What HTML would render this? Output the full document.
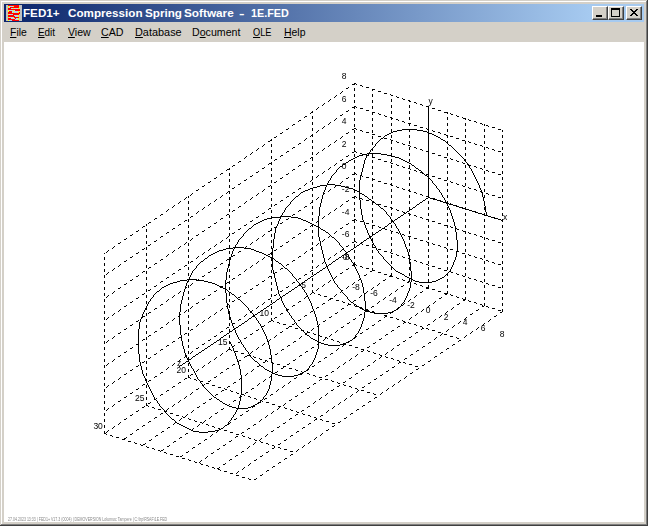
<!DOCTYPE html>
<html><head><meta charset="utf-8"><style>
*{margin:0;padding:0;box-sizing:border-box}
html,body{width:648px;height:526px;overflow:hidden;background:#d4d0c8;font-family:"Liberation Sans",sans-serif}
#win{position:absolute;left:0;top:0;width:648px;height:526px;background:#d4d0c8}
.edge{position:absolute}
#title{position:absolute;left:4px;top:4px;width:640px;height:18px;background:linear-gradient(to right,#0a246a 0px,#a6caf0 586px)}
.tw{position:absolute;top:7px;transform-origin:0 0;font-weight:bold;font-size:11px;color:#fff;white-space:pre;line-height:13px}
.btn{position:absolute;top:6px;width:16px;height:14px;background:#d4d0c8;border-top:1px solid #fff;border-left:1px solid #fff;border-right:1px solid #404040;border-bottom:1px solid #404040;box-shadow:inset -1px -1px 0 #808080}
.mi{position:absolute;top:26px;transform-origin:0 0;font-size:11px;line-height:13px;color:#000;white-space:pre}
.mi u{text-decoration:underline}
#client{position:absolute;left:4px;top:42px;width:640px;height:480px;background:#fff;overflow:hidden}
#plot{position:absolute;left:0;top:0}
#status{position:absolute;left:8px;top:516px;font-size:5px;line-height:6px;color:#888;white-space:pre;transform:scaleX(0.715);transform-origin:0 0}
</style></head><body><div id="win">
<div class="edge" style="left:0;top:0;width:648px;height:1px;background:#d4d0c8"></div>
<div class="edge" style="left:1px;top:1px;width:645px;height:1px;background:#fff"></div>
<div class="edge" style="left:1px;top:1px;width:1px;height:523px;background:#fff"></div>
<div class="edge" style="left:647px;top:0;width:1px;height:526px;background:#404040"></div>
<div class="edge" style="left:0;top:525px;width:648px;height:1px;background:#404040"></div>
<div class="edge" style="left:646px;top:1px;width:1px;height:524px;background:#808080"></div>
<div class="edge" style="left:1px;top:524px;width:646px;height:1px;background:#808080"></div>
<div id="title"><svg width="16" height="16" viewBox="0 0 16 16" shape-rendering="crispEdges" style="position:absolute;left:2px;top:1px"><rect x="0" y="0" width="2" height="1" fill="#c0c0c0"/><rect x="2" y="0" width="11" height="1" fill="#ff0000"/><rect x="13" y="0" width="3" height="1" fill="#c0c0c0"/><rect x="0" y="1" width="2" height="1" fill="#c0c0c0"/><rect x="2" y="1" width="1" height="1" fill="#ffff00"/><rect x="3" y="1" width="4" height="1" fill="#b4d4e4"/><rect x="7" y="1" width="1" height="1" fill="#ffff00"/><rect x="8" y="1" width="5" height="1" fill="#ff0000"/><rect x="13" y="1" width="3" height="1" fill="#c0c0c0"/><rect x="0" y="2" width="2" height="1" fill="#c0c0c0"/><rect x="2" y="2" width="1" height="1" fill="#ffff00"/><rect x="3" y="2" width="1" height="1" fill="#b4d4e4"/><rect x="4" y="2" width="9" height="1" fill="#ff0000"/><rect x="13" y="2" width="1" height="1" fill="#ffff00"/><rect x="14" y="2" width="2" height="1" fill="#c0c0c0"/><rect x="0" y="3" width="2" height="1" fill="#c0c0c0"/><rect x="2" y="3" width="3" height="1" fill="#ff0000"/><rect x="5" y="3" width="2" height="1" fill="#b4d4e4"/><rect x="7" y="3" width="1" height="1" fill="#ffff00"/><rect x="8" y="3" width="4" height="1" fill="#b4d4e4"/><rect x="12" y="3" width="1" height="1" fill="#ffff00"/><rect x="13" y="3" width="3" height="1" fill="#c0c0c0"/><rect x="0" y="4" width="2" height="1" fill="#c0c0c0"/><rect x="2" y="4" width="12" height="1" fill="#ff0000"/><rect x="14" y="4" width="2" height="1" fill="#c0c0c0"/><rect x="0" y="5" width="2" height="1" fill="#c0c0c0"/><rect x="2" y="5" width="1" height="1" fill="#ffff00"/><rect x="3" y="5" width="4" height="1" fill="#b4d4e4"/><rect x="7" y="5" width="1" height="1" fill="#ffff00"/><rect x="8" y="5" width="1" height="1" fill="#b4d4e4"/><rect x="9" y="5" width="5" height="1" fill="#ff0000"/><rect x="14" y="5" width="2" height="1" fill="#c0c0c0"/><rect x="0" y="6" width="2" height="1" fill="#c0c0c0"/><rect x="2" y="6" width="1" height="1" fill="#ffff00"/><rect x="3" y="6" width="3" height="1" fill="#ff0000"/><rect x="6" y="6" width="6" height="1" fill="#b4d4e4"/><rect x="12" y="6" width="1" height="1" fill="#ffff00"/><rect x="13" y="6" width="3" height="1" fill="#c0c0c0"/><rect x="0" y="7" width="2" height="1" fill="#c0c0c0"/><rect x="2" y="7" width="4" height="1" fill="#ff0000"/><rect x="6" y="7" width="1" height="1" fill="#b4d4e4"/><rect x="7" y="7" width="1" height="1" fill="#ffff00"/><rect x="8" y="7" width="4" height="1" fill="#b4d4e4"/><rect x="12" y="7" width="1" height="1" fill="#ffff00"/><rect x="13" y="7" width="1" height="1" fill="#ff0000"/><rect x="14" y="7" width="2" height="1" fill="#c0c0c0"/><rect x="0" y="8" width="2" height="1" fill="#c0c0c0"/><rect x="2" y="8" width="12" height="1" fill="#ff0000"/><rect x="14" y="8" width="2" height="1" fill="#c0c0c0"/><rect x="0" y="9" width="2" height="1" fill="#c0c0c0"/><rect x="2" y="9" width="1" height="1" fill="#ffff00"/><rect x="3" y="9" width="4" height="1" fill="#b4d4e4"/><rect x="7" y="9" width="6" height="1" fill="#ff0000"/><rect x="13" y="9" width="3" height="1" fill="#c0c0c0"/><rect x="0" y="10" width="2" height="1" fill="#c0c0c0"/><rect x="2" y="10" width="6" height="1" fill="#ff0000"/><rect x="8" y="10" width="4" height="1" fill="#b4d4e4"/><rect x="12" y="10" width="1" height="1" fill="#ffff00"/><rect x="13" y="10" width="3" height="1" fill="#c0c0c0"/><rect x="0" y="11" width="2" height="1" fill="#c0c0c0"/><rect x="2" y="11" width="7" height="1" fill="#ff0000"/><rect x="9" y="11" width="3" height="1" fill="#b4d4e4"/><rect x="12" y="11" width="1" height="1" fill="#ffff00"/><rect x="13" y="11" width="3" height="1" fill="#c0c0c0"/><rect x="0" y="12" width="2" height="1" fill="#c0c0c0"/><rect x="2" y="12" width="1" height="1" fill="#ffff00"/><rect x="3" y="12" width="4" height="1" fill="#b4d4e4"/><rect x="7" y="12" width="1" height="1" fill="#ffff00"/><rect x="8" y="12" width="5" height="1" fill="#ff0000"/><rect x="13" y="12" width="3" height="1" fill="#c0c0c0"/><rect x="0" y="13" width="2" height="1" fill="#c0c0c0"/><rect x="2" y="13" width="3" height="1" fill="#ff0000"/><rect x="5" y="13" width="4" height="1" fill="#b4d4e4"/><rect x="9" y="13" width="1" height="1" fill="#ff0000"/><rect x="10" y="13" width="2" height="1" fill="#b4d4e4"/><rect x="12" y="13" width="1" height="1" fill="#ffff00"/><rect x="13" y="13" width="3" height="1" fill="#c0c0c0"/><rect x="0" y="14" width="2" height="1" fill="#c0c0c0"/><rect x="2" y="14" width="7" height="1" fill="#ff0000"/><rect x="9" y="14" width="3" height="1" fill="#b4d4e4"/><rect x="12" y="14" width="1" height="1" fill="#ffff00"/><rect x="13" y="14" width="3" height="1" fill="#c0c0c0"/><rect x="0" y="15" width="2" height="1" fill="#c0c0c0"/><rect x="2" y="15" width="1" height="1" fill="#ffff00"/><rect x="3" y="15" width="3" height="1" fill="#b4d4e4"/><rect x="6" y="15" width="7" height="1" fill="#ff0000"/><rect x="13" y="15" width="3" height="1" fill="#c0c0c0"/></svg></div>
<span class="tw" style="left:23px;transform:scaleX(1.06)">FED1+</span><span class="tw" style="left:68px;transform:scaleX(1.06)">Compression</span><span class="tw" style="left:145px;transform:scaleX(1.06)">Spring</span><span class="tw" style="left:184px;transform:scaleX(1.07)">Software</span><span class="tw" style="left:239px;transform:scaleX(1.5)">-</span><span class="tw" style="left:251px;transform:scaleX(0.98)">1E.FED</span>
<div class="btn" style="left:592px"><svg width="14" height="12" style="position:absolute;left:0;top:0"><rect x="3" y="8" width="6" height="2" fill="#000"/></svg></div>
<div class="btn" style="left:608px"><svg width="14" height="12" style="position:absolute;left:0;top:0"><rect x="2" y="1" width="8" height="8" fill="none" stroke="#000" stroke-width="1" transform="translate(0.5 0.5)"/><rect x="2" y="1" width="9" height="2" fill="#000"/></svg></div>
<div class="btn" style="left:626px"><svg width="14" height="12" style="position:absolute;left:0;top:0"><path d="M3 2h2v1h-2zM9 2h2v1h-2zM4 3h2v1h-2zM8 3h2v1h-2zM5 4h4v1h-4zM6 5h2v1h-2zM5 6h4v1h-4zM4 7h2v1h-2zM8 7h2v1h-2zM3 8h2v1h-2zM9 8h2v1h-2z" fill="#000" shape-rendering="crispEdges"/></svg></div>
<span class="mi" style="left:10px;transform:scaleX(0.95)"><u>F</u>ile</span><span class="mi" style="left:38px;transform:scaleX(0.9)"><u>E</u>dit</span><span class="mi" style="left:68px;transform:scaleX(0.96)"><u>V</u>iew</span><span class="mi" style="left:101px;transform:scaleX(0.97)"><u>C</u>AD</span><span class="mi" style="left:134.5px;transform:scaleX(0.99)"><u>D</u>atabase</span><span class="mi" style="left:192px;transform:scaleX(0.965)">D<u>o</u>cument</span><span class="mi" style="left:253px;transform:scaleX(0.84)"><u>O</u>LE</span><span class="mi" style="left:283.5px;transform:scaleX(0.95)"><u>H</u>elp</span>
<div id="client"></div>
<svg id="plot" width="648" height="526" style="position:absolute;left:0;top:0">
<g shape-rendering="crispEdges">
<path d="M354 83h2v1h-2zM352 84h3v1h-3zM356 84h1v1h-1zM360 85h2v1h-2zM362 86h1v1h-1zM348 87h1v1h-1zM366 87h3v1h-3zM346 88h2v1h-2zM354 88h1v1h-1zM354 89h1v1h-1zM372 89h3v1h-3zM354 90h1v1h-1zM372 90h1v1h-1zM342 91h1v1h-1zM378 91h3v1h-3zM341 92h1v1h-1zM340 93h1v1h-1zM384 93h3v1h-3zM354 94h1v1h-1zM372 94h1v1h-1zM390 94h1v1h-1zM336 95h1v1h-1zM354 95h1v1h-1zM372 95h1v1h-1zM391 95h2v1h-2zM335 96h1v1h-1zM354 96h1v1h-1zM372 96h1v1h-1zM396 96h1v1h-1zM334 97h1v1h-1zM397 97h2v1h-2zM402 98h1v1h-1zM330 99h1v1h-1zM391 99h1v1h-1zM403 99h2v1h-2zM329 100h1v1h-1zM354 100h1v1h-1zM372 100h1v1h-1zM391 100h1v1h-1zM408 100h2v1h-2zM328 101h1v1h-1zM354 101h1v1h-1zM372 101h1v1h-1zM391 101h1v1h-1zM409 101h2v1h-2zM354 102h1v1h-1zM372 102h1v1h-1zM414 102h2v1h-2zM324 103h1v1h-1zM416 103h1v1h-1zM323 104h1v1h-1zM420 104h2v1h-2zM322 105h1v1h-1zM391 105h1v1h-1zM409 105h1v1h-1zM422 105h1v1h-1zM354 106h2v1h-2zM372 106h1v1h-1zM391 106h1v1h-1zM409 106h1v1h-1zM426 106h3v1h-3zM318 107h1v1h-1zM352 107h3v1h-3zM356 107h1v1h-1zM372 107h1v1h-1zM391 107h1v1h-1zM409 107h1v1h-1zM428 107h1v1h-1zM317 108h1v1h-1zM354 108h1v1h-1zM360 108h3v1h-3zM372 108h1v1h-1zM432 108h3v1h-3zM316 109h1v1h-1zM348 110h1v1h-1zM366 110h3v1h-3zM438 110h3v1h-3zM312 111h1v1h-1zM346 111h2v1h-2zM391 111h1v1h-1zM409 111h1v1h-1zM428 111h1v1h-1zM311 112h2v1h-2zM354 112h1v1h-1zM372 112h3v1h-3zM391 112h1v1h-1zM409 112h1v1h-1zM428 112h1v1h-1zM444 112h4v1h-4zM310 113h1v1h-1zM354 113h1v1h-1zM372 113h1v1h-1zM378 113h1v1h-1zM391 113h1v1h-1zM409 113h1v1h-1zM428 113h1v1h-1zM447 113h1v1h-1zM450 113h1v1h-1zM342 114h1v1h-1zM354 114h1v1h-1zM372 114h1v1h-1zM379 114h2v1h-2zM451 114h2v1h-2zM340 115h2v1h-2zM384 115h1v1h-1zM456 115h1v1h-1zM305 116h2v1h-2zM312 116h1v1h-1zM385 116h2v1h-2zM457 116h2v1h-2zM304 117h1v1h-1zM312 117h1v1h-1zM390 117h2v1h-2zM409 117h1v1h-1zM428 117h1v1h-1zM447 117h1v1h-1zM462 117h1v1h-1zM312 118h1v1h-1zM336 118h1v1h-1zM354 118h1v1h-1zM372 118h1v1h-1zM391 118h2v1h-2zM409 118h1v1h-1zM428 118h1v1h-1zM447 118h1v1h-1zM463 118h3v1h-3zM335 119h1v1h-1zM354 119h1v1h-1zM372 119h1v1h-1zM391 119h1v1h-1zM396 119h2v1h-2zM409 119h1v1h-1zM428 119h1v1h-1zM447 119h1v1h-1zM465 119h1v1h-1zM468 119h1v1h-1zM299 120h2v1h-2zM334 120h1v1h-1zM354 120h1v1h-1zM372 120h1v1h-1zM398 120h1v1h-1zM469 120h2v1h-2zM298 121h1v1h-1zM402 121h2v1h-2zM474 121h2v1h-2zM312 122h1v1h-1zM330 122h1v1h-1zM404 122h1v1h-1zM476 122h1v1h-1zM312 123h1v1h-1zM329 123h1v1h-1zM391 123h1v1h-1zM408 123h3v1h-3zM428 123h1v1h-1zM447 123h1v1h-1zM465 123h1v1h-1zM480 123h2v1h-2zM293 124h2v1h-2zM312 124h1v1h-1zM328 124h1v1h-1zM354 124h1v1h-1zM372 124h1v1h-1zM391 124h1v1h-1zM409 124h1v1h-1zM428 124h1v1h-1zM447 124h1v1h-1zM465 124h1v1h-1zM482 124h1v1h-1zM484 124h1v1h-1zM292 125h1v1h-1zM354 125h1v1h-1zM372 125h1v1h-1zM391 125h1v1h-1zM409 125h1v1h-1zM414 125h3v1h-3zM428 125h1v1h-1zM447 125h1v1h-1zM465 125h1v1h-1zM484 125h1v1h-1zM486 125h2v1h-2zM324 126h1v1h-1zM354 126h1v1h-1zM372 126h1v1h-1zM488 126h1v1h-1zM323 127h1v1h-1zM420 127h3v1h-3zM492 127h3v1h-3zM288 128h1v1h-1zM312 128h1v1h-1zM322 128h1v1h-1zM354 128h2v1h-2zM426 128h1v1h-1zM286 129h2v1h-2zM312 129h1v1h-1zM352 129h2v1h-2zM356 129h1v1h-1zM391 129h1v1h-1zM409 129h1v1h-1zM427 129h2v1h-2zM447 129h1v1h-1zM465 129h1v1h-1zM484 129h1v1h-1zM498 129h3v1h-3zM312 130h1v1h-1zM318 130h1v1h-1zM354 130h1v1h-1zM360 130h2v1h-2zM372 130h1v1h-1zM391 130h1v1h-1zM409 130h1v1h-1zM428 130h1v1h-1zM432 130h1v1h-1zM447 130h1v1h-1zM465 130h1v1h-1zM484 130h1v1h-1zM502 130h1v1h-1zM317 131h1v1h-1zM354 131h1v1h-1zM362 131h1v1h-1zM372 131h1v1h-1zM391 131h1v1h-1zM409 131h1v1h-1zM428 131h1v1h-1zM433 131h2v1h-2zM447 131h1v1h-1zM465 131h1v1h-1zM484 131h1v1h-1zM502 131h1v1h-1zM282 132h1v1h-1zM316 132h1v1h-1zM348 132h1v1h-1zM354 132h1v1h-1zM366 132h3v1h-3zM372 132h1v1h-1zM438 132h2v1h-2zM280 133h2v1h-2zM346 133h2v1h-2zM440 133h1v1h-1zM312 134h1v1h-1zM372 134h3v1h-3zM444 134h2v1h-2zM311 135h2v1h-2zM391 135h1v1h-1zM409 135h1v1h-1zM428 135h1v1h-1zM446 135h2v1h-2zM465 135h1v1h-1zM484 135h1v1h-1zM502 135h1v1h-1zM276 136h1v1h-1zM310 136h1v1h-1zM312 136h1v1h-1zM342 136h1v1h-1zM354 136h1v1h-1zM372 136h1v1h-1zM378 136h3v1h-3zM391 136h1v1h-1zM409 136h1v1h-1zM428 136h1v1h-1zM447 136h1v1h-1zM450 136h3v1h-3zM465 136h1v1h-1zM484 136h1v1h-1zM502 136h1v1h-1zM274 137h2v1h-2zM341 137h1v1h-1zM354 137h1v1h-1zM372 137h1v1h-1zM391 137h1v1h-1zM409 137h1v1h-1zM428 137h1v1h-1zM447 137h1v1h-1zM465 137h1v1h-1zM484 137h1v1h-1zM502 137h1v1h-1zM306 138h1v1h-1zM340 138h1v1h-1zM354 138h1v1h-1zM372 138h1v1h-1zM384 138h3v1h-3zM456 138h3v1h-3zM271 139h1v1h-1zM305 139h1v1h-1zM390 139h1v1h-1zM270 140h2v1h-2zM304 140h1v1h-1zM312 140h1v1h-1zM336 140h1v1h-1zM391 140h2v1h-2zM462 140h3v1h-3zM268 141h2v1h-2zM312 141h1v1h-1zM335 141h1v1h-1zM391 141h1v1h-1zM396 141h1v1h-1zM409 141h1v1h-1zM428 141h1v1h-1zM447 141h1v1h-1zM465 141h1v1h-1zM468 141h1v1h-1zM484 141h1v1h-1zM502 141h1v1h-1zM312 142h1v1h-1zM334 142h1v1h-1zM354 142h1v1h-1zM372 142h1v1h-1zM391 142h1v1h-1zM397 142h2v1h-2zM409 142h1v1h-1zM428 142h1v1h-1zM447 142h1v1h-1zM465 142h1v1h-1zM469 142h2v1h-2zM484 142h1v1h-1zM502 142h1v1h-1zM299 143h2v1h-2zM354 143h1v1h-1zM372 143h1v1h-1zM391 143h1v1h-1zM402 143h1v1h-1zM409 143h1v1h-1zM428 143h1v1h-1zM447 143h1v1h-1zM465 143h1v1h-1zM474 143h1v1h-1zM484 143h1v1h-1zM502 143h1v1h-1zM264 144h1v1h-1zM271 144h1v1h-1zM298 144h1v1h-1zM330 144h1v1h-1zM354 144h1v1h-1zM372 144h1v1h-1zM403 144h2v1h-2zM475 144h2v1h-2zM263 145h1v1h-1zM271 145h1v1h-1zM329 145h1v1h-1zM408 145h2v1h-2zM480 145h2v1h-2zM262 146h1v1h-1zM271 146h1v1h-1zM312 146h1v1h-1zM328 146h1v1h-1zM410 146h1v1h-1zM482 146h1v1h-1zM293 147h2v1h-2zM312 147h1v1h-1zM391 147h1v1h-1zM409 147h1v1h-1zM414 147h2v1h-2zM428 147h1v1h-1zM447 147h1v1h-1zM465 147h1v1h-1zM484 147h1v1h-1zM486 147h2v1h-2zM502 147h1v1h-1zM258 148h1v1h-1zM292 148h1v1h-1zM312 148h1v1h-1zM324 148h1v1h-1zM354 148h1v1h-1zM372 148h1v1h-1zM391 148h1v1h-1zM409 148h1v1h-1zM416 148h1v1h-1zM428 148h1v1h-1zM447 148h1v1h-1zM465 148h1v1h-1zM484 148h1v1h-1zM488 148h1v1h-1zM502 148h1v1h-1zM257 149h1v1h-1zM323 149h1v1h-1zM354 149h1v1h-1zM372 149h1v1h-1zM391 149h1v1h-1zM409 149h1v1h-1zM420 149h2v1h-2zM428 149h1v1h-1zM447 149h1v1h-1zM465 149h1v1h-1zM484 149h1v1h-1zM492 149h2v1h-2zM502 149h1v1h-1zM256 150h1v1h-1zM271 150h1v1h-1zM322 150h1v1h-1zM354 150h1v1h-1zM372 150h1v1h-1zM422 150h1v1h-1zM494 150h1v1h-1zM271 151h1v1h-1zM287 151h2v1h-2zM354 151h2v1h-2zM426 151h2v1h-2zM498 151h3v1h-3zM252 152h1v1h-1zM271 152h1v1h-1zM286 152h1v1h-1zM312 152h1v1h-1zM318 152h1v1h-1zM352 152h2v1h-2zM356 152h1v1h-1zM428 152h1v1h-1zM251 153h1v1h-1zM312 153h1v1h-1zM317 153h1v1h-1zM360 153h2v1h-2zM391 153h1v1h-1zM409 153h1v1h-1zM428 153h1v1h-1zM432 153h3v1h-3zM447 153h1v1h-1zM465 153h1v1h-1zM484 153h1v1h-1zM502 153h1v1h-1zM250 154h1v1h-1zM312 154h1v1h-1zM316 154h1v1h-1zM354 154h1v1h-1zM362 154h1v1h-1zM372 154h1v1h-1zM391 154h1v1h-1zM409 154h1v1h-1zM428 154h1v1h-1zM447 154h1v1h-1zM465 154h1v1h-1zM484 154h1v1h-1zM502 154h1v1h-1zM281 155h2v1h-2zM348 155h1v1h-1zM354 155h1v1h-1zM366 155h3v1h-3zM372 155h1v1h-1zM391 155h1v1h-1zM409 155h1v1h-1zM428 155h1v1h-1zM438 155h3v1h-3zM447 155h1v1h-1zM465 155h1v1h-1zM484 155h1v1h-1zM502 155h1v1h-1zM246 156h1v1h-1zM271 156h1v1h-1zM280 156h1v1h-1zM346 156h2v1h-2zM354 156h1v1h-1zM372 156h1v1h-1zM245 157h1v1h-1zM271 157h1v1h-1zM311 157h2v1h-2zM372 157h3v1h-3zM444 157h3v1h-3zM244 158h1v1h-1zM271 158h1v1h-1zM310 158h1v1h-1zM312 158h1v1h-1zM450 158h1v1h-1zM275 159h2v1h-2zM312 159h1v1h-1zM342 159h1v1h-1zM378 159h3v1h-3zM391 159h1v1h-1zM409 159h1v1h-1zM428 159h1v1h-1zM447 159h1v1h-1zM451 159h2v1h-2zM465 159h1v1h-1zM484 159h1v1h-1zM502 159h1v1h-1zM274 160h1v1h-1zM312 160h1v1h-1zM340 160h2v1h-2zM354 160h1v1h-1zM372 160h1v1h-1zM391 160h1v1h-1zM409 160h1v1h-1zM428 160h1v1h-1zM447 160h1v1h-1zM456 160h1v1h-1zM465 160h1v1h-1zM484 160h1v1h-1zM502 160h1v1h-1zM239 161h2v1h-2zM305 161h2v1h-2zM354 161h1v1h-1zM372 161h1v1h-1zM384 161h3v1h-3zM391 161h1v1h-1zM409 161h1v1h-1zM428 161h1v1h-1zM447 161h1v1h-1zM457 161h2v1h-2zM465 161h1v1h-1zM484 161h1v1h-1zM502 161h1v1h-1zM238 162h1v1h-1zM271 162h1v1h-1zM304 162h1v1h-1zM354 162h1v1h-1zM372 162h1v1h-1zM390 162h1v1h-1zM462 162h1v1h-1zM269 163h3v1h-3zM336 163h1v1h-1zM391 163h2v1h-2zM463 163h2v1h-2zM268 164h1v1h-1zM271 164h1v1h-1zM312 164h1v1h-1zM335 164h1v1h-1zM396 164h1v1h-1zM468 164h1v1h-1zM233 165h2v1h-2zM299 165h2v1h-2zM312 165h1v1h-1zM334 165h1v1h-1zM391 165h1v1h-1zM397 165h2v1h-2zM409 165h1v1h-1zM428 165h1v1h-1zM447 165h1v1h-1zM465 165h1v1h-1zM469 165h2v1h-2zM484 165h1v1h-1zM502 165h1v1h-1zM232 166h1v1h-1zM298 166h1v1h-1zM312 166h1v1h-1zM354 166h1v1h-1zM372 166h1v1h-1zM391 166h1v1h-1zM402 166h1v1h-1zM409 166h1v1h-1zM428 166h1v1h-1zM447 166h1v1h-1zM465 166h1v1h-1zM474 166h2v1h-2zM484 166h1v1h-1zM502 166h1v1h-1zM264 167h1v1h-1zM330 167h1v1h-1zM354 167h1v1h-1zM372 167h1v1h-1zM391 167h1v1h-1zM403 167h2v1h-2zM409 167h1v1h-1zM428 167h1v1h-1zM447 167h1v1h-1zM465 167h1v1h-1zM476 167h1v1h-1zM484 167h1v1h-1zM502 167h1v1h-1zM229 168h1v1h-1zM262 168h2v1h-2zM271 168h1v1h-1zM329 168h1v1h-1zM354 168h1v1h-1zM372 168h1v1h-1zM408 168h2v1h-2zM480 168h2v1h-2zM227 169h3v1h-3zM271 169h1v1h-1zM293 169h2v1h-2zM328 169h1v1h-1zM410 169h1v1h-1zM482 169h1v1h-1zM226 170h1v1h-1zM271 170h1v1h-1zM292 170h1v1h-1zM312 170h1v1h-1zM414 170h2v1h-2zM486 170h2v1h-2zM258 171h1v1h-1zM312 171h1v1h-1zM324 171h1v1h-1zM391 171h1v1h-1zM409 171h1v1h-1zM416 171h1v1h-1zM428 171h1v1h-1zM447 171h1v1h-1zM465 171h1v1h-1zM484 171h1v1h-1zM488 171h1v1h-1zM502 171h1v1h-1zM256 172h2v1h-2zM312 172h1v1h-1zM323 172h1v1h-1zM354 172h1v1h-1zM372 172h1v1h-1zM391 172h1v1h-1zM409 172h1v1h-1zM420 172h2v1h-2zM428 172h1v1h-1zM447 172h1v1h-1zM465 172h1v1h-1zM484 172h1v1h-1zM492 172h3v1h-3zM502 172h1v1h-1zM221 173h2v1h-2zM229 173h1v1h-1zM288 173h1v1h-1zM322 173h1v1h-1zM354 173h2v1h-2zM372 173h1v1h-1zM391 173h1v1h-1zM409 173h1v1h-1zM422 173h1v1h-1zM428 173h1v1h-1zM447 173h1v1h-1zM465 173h1v1h-1zM484 173h1v1h-1zM502 173h1v1h-1zM220 174h1v1h-1zM229 174h1v1h-1zM271 174h1v1h-1zM286 174h2v1h-2zM352 174h3v1h-3zM356 174h1v1h-1zM372 174h1v1h-1zM426 174h2v1h-2zM498 174h3v1h-3zM229 175h1v1h-1zM252 175h1v1h-1zM271 175h1v1h-1zM318 175h1v1h-1zM360 175h2v1h-2zM428 175h1v1h-1zM250 176h2v1h-2zM271 176h1v1h-1zM312 176h1v1h-1zM317 176h1v1h-1zM362 176h1v1h-1zM432 176h3v1h-3zM216 177h1v1h-1zM282 177h1v1h-1zM312 177h1v1h-1zM316 177h1v1h-1zM348 177h1v1h-1zM366 177h3v1h-3zM391 177h1v1h-1zM409 177h1v1h-1zM428 177h1v1h-1zM447 177h1v1h-1zM465 177h1v1h-1zM484 177h1v1h-1zM502 177h1v1h-1zM214 178h2v1h-2zM280 178h2v1h-2zM312 178h1v1h-1zM346 178h2v1h-2zM354 178h1v1h-1zM372 178h1v1h-1zM391 178h1v1h-1zM409 178h1v1h-1zM428 178h1v1h-1zM438 178h3v1h-3zM447 178h1v1h-1zM465 178h1v1h-1zM484 178h1v1h-1zM502 178h1v1h-1zM229 179h1v1h-1zM246 179h1v1h-1zM312 179h1v1h-1zM354 179h1v1h-1zM372 179h3v1h-3zM391 179h1v1h-1zM409 179h1v1h-1zM428 179h1v1h-1zM447 179h1v1h-1zM465 179h1v1h-1zM484 179h1v1h-1zM502 179h1v1h-1zM229 180h1v1h-1zM244 180h2v1h-2zM271 180h1v1h-1zM311 180h1v1h-1zM354 180h1v1h-1zM372 180h1v1h-1zM444 180h3v1h-3zM210 181h1v1h-1zM229 181h1v1h-1zM271 181h1v1h-1zM276 181h1v1h-1zM310 181h1v1h-1zM342 181h1v1h-1zM378 181h3v1h-3zM450 181h1v1h-1zM208 182h2v1h-2zM271 182h1v1h-1zM274 182h2v1h-2zM312 182h1v1h-1zM341 182h1v1h-1zM451 182h2v1h-2zM240 183h1v1h-1zM306 183h1v1h-1zM312 183h1v1h-1zM340 183h1v1h-1zM384 183h3v1h-3zM391 183h1v1h-1zM409 183h1v1h-1zM428 183h1v1h-1zM447 183h1v1h-1zM456 183h1v1h-1zM465 183h1v1h-1zM484 183h1v1h-1zM502 183h1v1h-1zM238 184h2v1h-2zM305 184h1v1h-1zM312 184h1v1h-1zM354 184h1v1h-1zM372 184h1v1h-1zM390 184h2v1h-2zM409 184h1v1h-1zM428 184h1v1h-1zM447 184h1v1h-1zM457 184h2v1h-2zM465 184h1v1h-1zM484 184h1v1h-1zM502 184h1v1h-1zM204 185h1v1h-1zM229 185h1v1h-1zM270 185h1v1h-1zM304 185h1v1h-1zM336 185h1v1h-1zM354 185h1v1h-1zM372 185h1v1h-1zM391 185h2v1h-2zM409 185h1v1h-1zM428 185h1v1h-1zM447 185h1v1h-1zM462 185h1v1h-1zM465 185h1v1h-1zM484 185h1v1h-1zM502 185h1v1h-1zM202 186h2v1h-2zM229 186h1v1h-1zM268 186h2v1h-2zM271 186h1v1h-1zM335 186h1v1h-1zM354 186h1v1h-1zM372 186h1v1h-1zM396 186h1v1h-1zM463 186h2v1h-2zM229 187h1v1h-1zM234 187h1v1h-1zM271 187h1v1h-1zM334 187h1v1h-1zM397 187h2v1h-2zM468 187h1v1h-1zM232 188h2v1h-2zM271 188h1v1h-1zM299 188h2v1h-2zM312 188h1v1h-1zM402 188h1v1h-1zM469 188h2v1h-2zM198 189h1v1h-1zM264 189h1v1h-1zM298 189h1v1h-1zM312 189h1v1h-1zM330 189h1v1h-1zM391 189h1v1h-1zM403 189h2v1h-2zM409 189h1v1h-1zM428 189h1v1h-1zM447 189h1v1h-1zM465 189h1v1h-1zM474 189h2v1h-2zM484 189h1v1h-1zM502 189h1v1h-1zM196 190h2v1h-2zM263 190h1v1h-1zM312 190h1v1h-1zM329 190h1v1h-1zM354 190h1v1h-1zM372 190h1v1h-1zM391 190h1v1h-1zM408 190h2v1h-2zM428 190h1v1h-1zM447 190h1v1h-1zM465 190h1v1h-1zM476 190h1v1h-1zM484 190h1v1h-1zM502 190h1v1h-1zM228 191h2v1h-2zM262 191h1v1h-1zM328 191h1v1h-1zM354 191h1v1h-1zM372 191h1v1h-1zM391 191h1v1h-1zM409 191h2v1h-2zM428 191h1v1h-1zM447 191h1v1h-1zM465 191h1v1h-1zM480 191h2v1h-2zM484 191h1v1h-1zM502 191h1v1h-1zM227 192h1v1h-1zM229 192h1v1h-1zM271 192h1v1h-1zM293 192h2v1h-2zM354 192h1v1h-1zM372 192h1v1h-1zM414 192h2v1h-2zM482 192h1v1h-1zM192 193h1v1h-1zM226 193h1v1h-1zM229 193h1v1h-1zM258 193h1v1h-1zM271 193h1v1h-1zM292 193h1v1h-1zM324 193h1v1h-1zM416 193h1v1h-1zM486 193h2v1h-2zM191 194h1v1h-1zM257 194h1v1h-1zM271 194h1v1h-1zM312 194h1v1h-1zM323 194h1v1h-1zM420 194h2v1h-2zM488 194h1v1h-1zM190 195h1v1h-1zM222 195h1v1h-1zM256 195h1v1h-1zM312 195h1v1h-1zM322 195h1v1h-1zM391 195h1v1h-1zM409 195h1v1h-1zM422 195h1v1h-1zM428 195h1v1h-1zM447 195h1v1h-1zM465 195h1v1h-1zM484 195h1v1h-1zM492 195h3v1h-3zM502 195h1v1h-1zM188 196h1v1h-1zM221 196h1v1h-1zM287 196h2v1h-2zM312 196h1v1h-1zM354 196h2v1h-2zM372 196h1v1h-1zM391 196h1v1h-1zM409 196h1v1h-1zM426 196h3v1h-3zM447 196h1v1h-1zM465 196h1v1h-1zM484 196h1v1h-1zM502 196h1v1h-1zM186 197h1v1h-1zM188 197h1v1h-1zM220 197h1v1h-1zM229 197h1v1h-1zM252 197h1v1h-1zM286 197h1v1h-1zM318 197h1v1h-1zM352 197h3v1h-3zM356 197h1v1h-1zM372 197h1v1h-1zM391 197h1v1h-1zM409 197h1v1h-1zM428 197h1v1h-1zM447 197h1v1h-1zM465 197h1v1h-1zM484 197h1v1h-1zM498 197h3v1h-3zM502 197h1v1h-1zM185 198h1v1h-1zM229 198h1v1h-1zM251 198h1v1h-1zM271 198h1v1h-1zM317 198h1v1h-1zM354 198h1v1h-1zM360 198h2v1h-2zM372 198h1v1h-1zM432 198h3v1h-3zM184 199h1v1h-1zM216 199h1v1h-1zM229 199h1v1h-1zM250 199h1v1h-1zM271 199h1v1h-1zM316 199h1v1h-1zM362 199h1v1h-1zM215 200h1v1h-1zM271 200h1v1h-1zM281 200h2v1h-2zM312 200h1v1h-1zM348 200h1v1h-1zM366 200h3v1h-3zM438 200h3v1h-3zM180 201h1v1h-1zM188 201h1v1h-1zM214 201h1v1h-1zM246 201h1v1h-1zM280 201h1v1h-1zM312 201h1v1h-1zM346 201h2v1h-2zM391 201h1v1h-1zM409 201h1v1h-1zM428 201h1v1h-1zM447 201h1v1h-1zM465 201h1v1h-1zM484 201h1v1h-1zM502 201h1v1h-1zM179 202h1v1h-1zM188 202h1v1h-1zM245 202h1v1h-1zM311 202h2v1h-2zM354 202h1v1h-1zM372 202h3v1h-3zM391 202h1v1h-1zM409 202h1v1h-1zM428 202h1v1h-1zM444 202h4v1h-4zM465 202h1v1h-1zM484 202h1v1h-1zM502 202h1v1h-1zM178 203h1v1h-1zM188 203h1v1h-1zM210 203h1v1h-1zM229 203h1v1h-1zM244 203h1v1h-1zM310 203h1v1h-1zM354 203h1v1h-1zM372 203h1v1h-1zM391 203h1v1h-1zM409 203h1v1h-1zM428 203h1v1h-1zM447 203h1v1h-1zM450 203h1v1h-1zM465 203h1v1h-1zM484 203h1v1h-1zM502 203h1v1h-1zM209 204h1v1h-1zM229 204h1v1h-1zM271 204h1v1h-1zM275 204h2v1h-2zM342 204h1v1h-1zM354 204h1v1h-1zM372 204h1v1h-1zM378 204h3v1h-3zM451 204h2v1h-2zM174 205h1v1h-1zM208 205h1v1h-1zM229 205h1v1h-1zM271 205h1v1h-1zM274 205h1v1h-1zM341 205h1v1h-1zM456 205h1v1h-1zM173 206h1v1h-1zM239 206h2v1h-2zM271 206h1v1h-1zM305 206h2v1h-2zM312 206h1v1h-1zM340 206h1v1h-1zM384 206h3v1h-3zM457 206h2v1h-2zM172 207h1v1h-1zM188 207h1v1h-1zM204 207h1v1h-1zM238 207h1v1h-1zM304 207h1v1h-1zM312 207h1v1h-1zM390 207h2v1h-2zM409 207h1v1h-1zM428 207h1v1h-1zM447 207h1v1h-1zM462 207h1v1h-1zM465 207h1v1h-1zM484 207h1v1h-1zM502 207h1v1h-1zM188 208h1v1h-1zM203 208h1v1h-1zM269 208h2v1h-2zM312 208h1v1h-1zM336 208h1v1h-1zM354 208h1v1h-1zM372 208h1v1h-1zM391 208h2v1h-2zM409 208h1v1h-1zM428 208h1v1h-1zM447 208h1v1h-1zM463 208h3v1h-3zM484 208h1v1h-1zM502 208h1v1h-1zM168 209h1v1h-1zM188 209h1v1h-1zM202 209h1v1h-1zM229 209h1v1h-1zM268 209h1v1h-1zM335 209h1v1h-1zM354 209h1v1h-1zM372 209h1v1h-1zM391 209h1v1h-1zM396 209h1v1h-1zM409 209h1v1h-1zM428 209h1v1h-1zM447 209h1v1h-1zM465 209h1v1h-1zM468 209h1v1h-1zM484 209h1v1h-1zM502 209h1v1h-1zM167 210h1v1h-1zM229 210h1v1h-1zM233 210h2v1h-2zM271 210h1v1h-1zM299 210h2v1h-2zM334 210h1v1h-1zM354 210h1v1h-1zM372 210h1v1h-1zM397 210h2v1h-2zM469 210h2v1h-2zM166 211h1v1h-1zM198 211h1v1h-1zM229 211h1v1h-1zM232 211h1v1h-1zM271 211h1v1h-1zM298 211h1v1h-1zM402 211h1v1h-1zM474 211h2v1h-2zM197 212h1v1h-1zM264 212h1v1h-1zM271 212h1v1h-1zM312 212h1v1h-1zM330 212h1v1h-1zM403 212h2v1h-2zM476 212h1v1h-1zM188 213h1v1h-1zM196 213h1v1h-1zM262 213h2v1h-2zM312 213h1v1h-1zM329 213h1v1h-1zM391 213h1v1h-1zM408 213h2v1h-2zM428 213h1v1h-1zM447 213h1v1h-1zM465 213h1v1h-1zM480 213h2v1h-2zM484 213h1v1h-1zM502 213h1v1h-1zM161 214h2v1h-2zM188 214h1v1h-1zM227 214h2v1h-2zM293 214h2v1h-2zM312 214h1v1h-1zM328 214h1v1h-1zM354 214h1v1h-1zM372 214h1v1h-1zM391 214h1v1h-1zM409 214h2v1h-2zM428 214h1v1h-1zM447 214h1v1h-1zM465 214h1v1h-1zM482 214h1v1h-1zM484 214h1v1h-1zM502 214h1v1h-1zM160 215h1v1h-1zM188 215h1v1h-1zM226 215h1v1h-1zM229 215h1v1h-1zM292 215h1v1h-1zM354 215h1v1h-1zM372 215h1v1h-1zM391 215h1v1h-1zM409 215h1v1h-1zM414 215h2v1h-2zM428 215h1v1h-1zM447 215h1v1h-1zM465 215h1v1h-1zM484 215h1v1h-1zM486 215h2v1h-2zM502 215h1v1h-1zM191 216h2v1h-2zM229 216h1v1h-1zM258 216h1v1h-1zM271 216h1v1h-1zM324 216h1v1h-1zM354 216h1v1h-1zM372 216h1v1h-1zM416 216h1v1h-1zM488 216h1v1h-1zM190 217h1v1h-1zM229 217h1v1h-1zM256 217h2v1h-2zM271 217h1v1h-1zM323 217h1v1h-1zM420 217h2v1h-2zM492 217h3v1h-3zM155 218h2v1h-2zM221 218h2v1h-2zM271 218h1v1h-1zM288 218h1v1h-1zM312 218h1v1h-1zM322 218h1v1h-1zM422 218h1v1h-1zM154 219h1v1h-1zM188 219h1v1h-1zM220 219h1v1h-1zM286 219h2v1h-2zM312 219h1v1h-1zM354 219h2v1h-2zM391 219h1v1h-1zM409 219h1v1h-1zM426 219h3v1h-3zM447 219h1v1h-1zM465 219h1v1h-1zM484 219h1v1h-1zM498 219h3v1h-3zM502 219h1v1h-1zM185 220h2v1h-2zM188 220h1v1h-1zM252 220h1v1h-1zM312 220h1v1h-1zM318 220h1v1h-1zM352 220h3v1h-3zM356 220h1v1h-1zM372 220h1v1h-1zM391 220h1v1h-1zM409 220h1v1h-1zM428 220h1v1h-1zM447 220h1v1h-1zM465 220h1v1h-1zM484 220h1v1h-1zM502 220h1v1h-1zM184 221h1v1h-1zM188 221h1v1h-1zM229 221h1v1h-1zM250 221h2v1h-2zM317 221h1v1h-1zM354 221h1v1h-1zM360 221h3v1h-3zM372 221h1v1h-1zM391 221h1v1h-1zM409 221h1v1h-1zM428 221h1v1h-1zM432 221h3v1h-3zM447 221h1v1h-1zM465 221h1v1h-1zM484 221h1v1h-1zM502 221h1v1h-1zM149 222h2v1h-2zM216 222h1v1h-1zM229 222h1v1h-1zM271 222h1v1h-1zM282 222h1v1h-1zM316 222h1v1h-1zM354 222h1v1h-1zM372 222h1v1h-1zM148 223h1v1h-1zM214 223h2v1h-2zM229 223h1v1h-1zM271 223h1v1h-1zM280 223h2v1h-2zM348 223h1v1h-1zM366 223h3v1h-3zM438 223h3v1h-3zM146 224h1v1h-1zM179 224h2v1h-2zM246 224h1v1h-1zM271 224h1v1h-1zM312 224h1v1h-1zM346 224h2v1h-2zM146 225h1v1h-1zM178 225h1v1h-1zM188 225h1v1h-1zM244 225h2v1h-2zM311 225h2v1h-2zM372 225h3v1h-3zM391 225h1v1h-1zM409 225h1v1h-1zM428 225h1v1h-1zM444 225h4v1h-4zM465 225h1v1h-1zM484 225h1v1h-1zM502 225h1v1h-1zM143 226h2v1h-2zM188 226h1v1h-1zM210 226h1v1h-1zM276 226h1v1h-1zM310 226h1v1h-1zM312 226h1v1h-1zM354 226h1v1h-1zM372 226h1v1h-1zM378 226h1v1h-1zM391 226h1v1h-1zM409 226h1v1h-1zM428 226h1v1h-1zM447 226h1v1h-1zM450 226h1v1h-1zM465 226h1v1h-1zM484 226h1v1h-1zM502 226h1v1h-1zM142 227h1v1h-1zM188 227h1v1h-1zM208 227h2v1h-2zM229 227h1v1h-1zM274 227h2v1h-2zM342 227h1v1h-1zM354 227h1v1h-1zM372 227h1v1h-1zM379 227h2v1h-2zM391 227h1v1h-1zM409 227h1v1h-1zM428 227h1v1h-1zM447 227h1v1h-1zM451 227h2v1h-2zM465 227h1v1h-1zM484 227h1v1h-1zM502 227h1v1h-1zM173 228h2v1h-2zM229 228h1v1h-1zM240 228h1v1h-1zM271 228h1v1h-1zM340 228h2v1h-2zM354 228h1v1h-1zM372 228h1v1h-1zM384 228h1v1h-1zM456 228h1v1h-1zM146 229h1v1h-1zM172 229h1v1h-1zM229 229h1v1h-1zM238 229h2v1h-2zM271 229h1v1h-1zM305 229h2v1h-2zM385 229h2v1h-2zM457 229h2v1h-2zM138 230h1v1h-1zM146 230h1v1h-1zM204 230h1v1h-1zM270 230h2v1h-2zM304 230h1v1h-1zM312 230h1v1h-1zM390 230h1v1h-1zM462 230h1v1h-1zM136 231h2v1h-2zM146 231h1v1h-1zM188 231h1v1h-1zM202 231h2v1h-2zM268 231h2v1h-2zM312 231h1v1h-1zM336 231h1v1h-1zM391 231h2v1h-2zM409 231h1v1h-1zM428 231h1v1h-1zM447 231h1v1h-1zM463 231h3v1h-3zM484 231h1v1h-1zM502 231h1v1h-1zM167 232h2v1h-2zM188 232h1v1h-1zM234 232h1v1h-1zM312 232h1v1h-1zM335 232h1v1h-1zM354 232h1v1h-1zM372 232h1v1h-1zM391 232h1v1h-1zM396 232h2v1h-2zM409 232h1v1h-1zM428 232h1v1h-1zM447 232h1v1h-1zM465 232h1v1h-1zM468 232h1v1h-1zM484 232h1v1h-1zM502 232h1v1h-1zM166 233h1v1h-1zM188 233h1v1h-1zM229 233h1v1h-1zM232 233h2v1h-2zM299 233h2v1h-2zM334 233h1v1h-1zM354 233h1v1h-1zM372 233h1v1h-1zM391 233h1v1h-1zM398 233h1v1h-1zM409 233h1v1h-1zM428 233h1v1h-1zM447 233h1v1h-1zM465 233h1v1h-1zM469 233h2v1h-2zM484 233h1v1h-1zM502 233h1v1h-1zM132 234h1v1h-1zM198 234h1v1h-1zM229 234h1v1h-1zM264 234h1v1h-1zM271 234h1v1h-1zM298 234h1v1h-1zM354 234h1v1h-1zM372 234h1v1h-1zM402 234h2v1h-2zM474 234h2v1h-2zM130 235h2v1h-2zM146 235h1v1h-1zM196 235h2v1h-2zM229 235h1v1h-1zM263 235h1v1h-1zM271 235h1v1h-1zM330 235h1v1h-1zM404 235h1v1h-1zM476 235h1v1h-1zM146 236h1v1h-1zM161 236h2v1h-2zM228 236h1v1h-1zM262 236h1v1h-1zM271 236h1v1h-1zM312 236h1v1h-1zM329 236h1v1h-1zM408 236h3v1h-3zM480 236h2v1h-2zM146 237h1v1h-1zM160 237h1v1h-1zM188 237h1v1h-1zM227 237h1v1h-1zM293 237h2v1h-2zM312 237h1v1h-1zM328 237h1v1h-1zM391 237h1v1h-1zM409 237h1v1h-1zM428 237h1v1h-1zM447 237h1v1h-1zM465 237h1v1h-1zM482 237h1v1h-1zM484 237h1v1h-1zM502 237h1v1h-1zM126 238h1v1h-1zM188 238h1v1h-1zM192 238h1v1h-1zM226 238h1v1h-1zM258 238h1v1h-1zM292 238h1v1h-1zM312 238h1v1h-1zM354 238h1v1h-1zM372 238h1v1h-1zM391 238h1v1h-1zM409 238h1v1h-1zM414 238h3v1h-3zM428 238h1v1h-1zM447 238h1v1h-1zM465 238h1v1h-1zM484 238h1v1h-1zM486 238h2v1h-2zM502 238h1v1h-1zM124 239h2v1h-2zM188 239h1v1h-1zM191 239h1v1h-1zM229 239h1v1h-1zM257 239h1v1h-1zM324 239h1v1h-1zM354 239h1v1h-1zM372 239h1v1h-1zM391 239h1v1h-1zM409 239h1v1h-1zM428 239h1v1h-1zM447 239h1v1h-1zM465 239h1v1h-1zM484 239h1v1h-1zM488 239h1v1h-1zM502 239h1v1h-1zM156 240h1v1h-1zM190 240h1v1h-1zM222 240h1v1h-1zM229 240h1v1h-1zM256 240h1v1h-1zM271 240h1v1h-1zM323 240h1v1h-1zM354 240h1v1h-1zM372 240h1v1h-1zM420 240h3v1h-3zM492 240h3v1h-3zM146 241h1v1h-1zM154 241h2v1h-2zM221 241h1v1h-1zM229 241h1v1h-1zM271 241h1v1h-1zM288 241h1v1h-1zM322 241h1v1h-1zM354 241h2v1h-2zM426 241h1v1h-1zM120 242h1v1h-1zM146 242h1v1h-1zM186 242h1v1h-1zM220 242h1v1h-1zM252 242h1v1h-1zM271 242h1v1h-1zM286 242h2v1h-2zM312 242h1v1h-1zM352 242h2v1h-2zM356 242h1v1h-1zM427 242h2v1h-2zM498 242h3v1h-3zM118 243h2v1h-2zM146 243h1v1h-1zM185 243h1v1h-1zM188 243h1v1h-1zM251 243h1v1h-1zM312 243h1v1h-1zM318 243h1v1h-1zM360 243h2v1h-2zM391 243h1v1h-1zM409 243h1v1h-1zM428 243h1v1h-1zM432 243h1v1h-1zM447 243h1v1h-1zM465 243h1v1h-1zM484 243h1v1h-1zM502 243h1v1h-1zM150 244h1v1h-1zM184 244h1v1h-1zM188 244h1v1h-1zM216 244h1v1h-1zM250 244h1v1h-1zM312 244h1v1h-1zM317 244h1v1h-1zM354 244h1v1h-1zM362 244h1v1h-1zM372 244h1v1h-1zM391 244h1v1h-1zM409 244h1v1h-1zM428 244h1v1h-1zM433 244h2v1h-2zM447 244h1v1h-1zM465 244h1v1h-1zM484 244h1v1h-1zM502 244h1v1h-1zM148 245h2v1h-2zM188 245h1v1h-1zM215 245h1v1h-1zM229 245h1v1h-1zM282 245h1v1h-1zM316 245h1v1h-1zM348 245h1v1h-1zM354 245h1v1h-1zM366 245h3v1h-3zM372 245h1v1h-1zM391 245h1v1h-1zM409 245h1v1h-1zM428 245h1v1h-1zM438 245h2v1h-2zM447 245h1v1h-1zM465 245h1v1h-1zM484 245h1v1h-1zM502 245h1v1h-1zM114 246h1v1h-1zM180 246h1v1h-1zM214 246h1v1h-1zM229 246h1v1h-1zM246 246h1v1h-1zM271 246h1v1h-1zM280 246h2v1h-2zM346 246h2v1h-2zM354 246h1v1h-1zM372 246h1v1h-1zM440 246h1v1h-1zM113 247h1v1h-1zM146 247h1v1h-1zM179 247h1v1h-1zM229 247h1v1h-1zM245 247h1v1h-1zM271 247h1v1h-1zM312 247h1v1h-1zM372 247h3v1h-3zM444 247h2v1h-2zM112 248h1v1h-1zM144 248h1v1h-1zM146 248h1v1h-1zM178 248h1v1h-1zM210 248h1v1h-1zM244 248h1v1h-1zM271 248h1v1h-1zM311 248h2v1h-2zM446 248h1v1h-1zM142 249h2v1h-2zM146 249h1v1h-1zM188 249h1v1h-1zM209 249h1v1h-1zM276 249h1v1h-1zM310 249h1v1h-1zM312 249h1v1h-1zM342 249h1v1h-1zM378 249h3v1h-3zM391 249h1v1h-1zM409 249h1v1h-1zM428 249h1v1h-1zM447 249h1v1h-1zM450 249h3v1h-3zM465 249h1v1h-1zM484 249h1v1h-1zM502 249h1v1h-1zM108 250h1v1h-1zM174 250h1v1h-1zM188 250h1v1h-1zM208 250h1v1h-1zM274 250h2v1h-2zM312 250h1v1h-1zM341 250h1v1h-1zM354 250h1v1h-1zM372 250h1v1h-1zM391 250h1v1h-1zM409 250h1v1h-1zM428 250h1v1h-1zM447 250h1v1h-1zM465 250h1v1h-1zM484 250h1v1h-1zM502 250h1v1h-1zM107 251h1v1h-1zM173 251h1v1h-1zM188 251h1v1h-1zM229 251h1v1h-1zM239 251h2v1h-2zM306 251h1v1h-1zM340 251h1v1h-1zM354 251h1v1h-1zM372 251h1v1h-1zM384 251h3v1h-3zM391 251h1v1h-1zM409 251h1v1h-1zM428 251h1v1h-1zM447 251h1v1h-1zM456 251h3v1h-3zM465 251h1v1h-1zM484 251h1v1h-1zM502 251h1v1h-1zM106 252h1v1h-1zM138 252h1v1h-1zM172 252h1v1h-1zM204 252h1v1h-1zM229 252h1v1h-1zM238 252h1v1h-1zM271 252h1v1h-1zM305 252h1v1h-1zM354 252h1v1h-1zM372 252h1v1h-1zM390 252h1v1h-1zM104 253h1v1h-1zM136 253h2v1h-2zM146 253h1v1h-1zM203 253h1v1h-1zM229 253h1v1h-1zM270 253h2v1h-2zM304 253h1v1h-1zM336 253h1v1h-1zM391 253h2v1h-2zM462 253h3v1h-3zM146 254h1v1h-1zM168 254h1v1h-1zM202 254h1v1h-1zM268 254h2v1h-2zM271 254h1v1h-1zM312 254h1v1h-1zM335 254h1v1h-1zM396 254h1v1h-1zM468 254h1v1h-1zM146 255h1v1h-1zM167 255h1v1h-1zM188 255h1v1h-1zM233 255h2v1h-2zM312 255h1v1h-1zM334 255h1v1h-1zM391 255h1v1h-1zM397 255h2v1h-2zM409 255h1v1h-1zM428 255h1v1h-1zM447 255h1v1h-1zM465 255h1v1h-1zM469 255h2v1h-2zM484 255h1v1h-1zM502 255h1v1h-1zM132 256h1v1h-1zM166 256h1v1h-1zM188 256h1v1h-1zM198 256h1v1h-1zM232 256h1v1h-1zM299 256h2v1h-2zM312 256h1v1h-1zM354 256h1v1h-1zM372 256h1v1h-1zM391 256h1v1h-1zM402 256h1v1h-1zM409 256h1v1h-1zM428 256h1v1h-1zM447 256h1v1h-1zM465 256h1v1h-1zM474 256h1v1h-1zM484 256h1v1h-1zM502 256h1v1h-1zM104 257h1v1h-1zM130 257h2v1h-2zM188 257h1v1h-1zM197 257h1v1h-1zM229 257h1v1h-1zM264 257h1v1h-1zM298 257h1v1h-1zM330 257h1v1h-1zM354 257h1v1h-1zM372 257h1v1h-1zM391 257h1v1h-1zM403 257h2v1h-2zM409 257h1v1h-1zM428 257h1v1h-1zM447 257h1v1h-1zM465 257h1v1h-1zM475 257h2v1h-2zM484 257h1v1h-1zM502 257h1v1h-1zM104 258h1v1h-1zM196 258h1v1h-1zM229 258h1v1h-1zM263 258h1v1h-1zM271 258h1v1h-1zM329 258h1v1h-1zM354 258h1v1h-1zM372 258h1v1h-1zM408 258h2v1h-2zM480 258h2v1h-2zM104 259h1v1h-1zM146 259h1v1h-1zM161 259h2v1h-2zM227 259h3v1h-3zM262 259h1v1h-1zM271 259h1v1h-1zM328 259h1v1h-1zM410 259h1v1h-1zM482 259h1v1h-1zM126 260h1v1h-1zM146 260h1v1h-1zM160 260h1v1h-1zM226 260h1v1h-1zM271 260h1v1h-1zM293 260h2v1h-2zM312 260h1v1h-1zM414 260h2v1h-2zM486 260h2v1h-2zM124 261h2v1h-2zM146 261h1v1h-1zM188 261h1v1h-1zM191 261h2v1h-2zM258 261h1v1h-1zM292 261h1v1h-1zM312 261h1v1h-1zM324 261h1v1h-1zM391 261h1v1h-1zM409 261h1v1h-1zM416 261h1v1h-1zM428 261h1v1h-1zM447 261h1v1h-1zM465 261h1v1h-1zM484 261h1v1h-1zM488 261h1v1h-1zM502 261h1v1h-1zM188 262h1v1h-1zM190 262h1v1h-1zM257 262h1v1h-1zM312 262h1v1h-1zM323 262h1v1h-1zM354 262h1v1h-1zM372 262h1v1h-1zM391 262h1v1h-1zM409 262h1v1h-1zM420 262h2v1h-2zM428 262h1v1h-1zM447 262h1v1h-1zM465 262h1v1h-1zM484 262h1v1h-1zM492 262h2v1h-2zM502 262h1v1h-1zM104 263h1v1h-1zM155 263h2v1h-2zM188 263h1v1h-1zM221 263h2v1h-2zM229 263h1v1h-1zM256 263h1v1h-1zM322 263h1v1h-1zM354 263h1v1h-1zM372 263h1v1h-1zM391 263h1v1h-1zM409 263h1v1h-1zM422 263h1v1h-1zM428 263h1v1h-1zM447 263h1v1h-1zM465 263h1v1h-1zM484 263h1v1h-1zM494 263h1v1h-1zM502 263h1v1h-1zM104 264h1v1h-1zM120 264h1v1h-1zM154 264h1v1h-1zM220 264h1v1h-1zM229 264h1v1h-1zM271 264h1v1h-1zM287 264h2v1h-2zM354 264h2v1h-2zM372 264h1v1h-1zM426 264h2v1h-2zM498 264h3v1h-3zM104 265h1v1h-1zM119 265h1v1h-1zM146 265h1v1h-1zM185 265h2v1h-2zM229 265h1v1h-1zM252 265h1v1h-1zM271 265h1v1h-1zM286 265h1v1h-1zM318 265h1v1h-1zM352 265h2v1h-2zM356 265h1v1h-1zM428 265h1v1h-1zM118 266h1v1h-1zM146 266h1v1h-1zM184 266h1v1h-1zM251 266h1v1h-1zM271 266h1v1h-1zM312 266h1v1h-1zM317 266h1v1h-1zM360 266h2v1h-2zM432 266h3v1h-3zM146 267h1v1h-1zM149 267h2v1h-2zM188 267h1v1h-1zM216 267h1v1h-1zM250 267h1v1h-1zM312 267h1v1h-1zM316 267h1v1h-1zM362 267h1v1h-1zM391 267h1v1h-1zM409 267h1v1h-1zM428 267h1v1h-1zM447 267h1v1h-1zM465 267h1v1h-1zM484 267h1v1h-1zM502 267h1v1h-1zM114 268h1v1h-1zM148 268h1v1h-1zM188 268h1v1h-1zM214 268h2v1h-2zM281 268h2v1h-2zM312 268h1v1h-1zM348 268h1v1h-1zM366 268h3v1h-3zM372 268h1v1h-1zM391 268h1v1h-1zM409 268h1v1h-1zM428 268h1v1h-1zM438 268h3v1h-3zM447 268h1v1h-1zM465 268h1v1h-1zM484 268h1v1h-1zM502 268h1v1h-1zM104 269h1v1h-1zM113 269h1v1h-1zM179 269h2v1h-2zM188 269h1v1h-1zM229 269h1v1h-1zM246 269h1v1h-1zM280 269h1v1h-1zM346 269h2v1h-2zM372 269h1v1h-1zM391 269h1v1h-1zM409 269h1v1h-1zM428 269h1v1h-1zM447 269h1v1h-1zM465 269h1v1h-1zM484 269h1v1h-1zM502 269h1v1h-1zM104 270h1v1h-1zM112 270h1v1h-1zM178 270h1v1h-1zM229 270h1v1h-1zM245 270h1v1h-1zM271 270h1v1h-1zM311 270h2v1h-2zM372 270h3v1h-3zM444 270h3v1h-3zM104 271h1v1h-1zM143 271h2v1h-2zM146 271h1v1h-1zM210 271h1v1h-1zM229 271h1v1h-1zM244 271h1v1h-1zM271 271h1v1h-1zM310 271h1v1h-1zM370 271h2v1h-2zM450 271h1v1h-1zM108 272h1v1h-1zM142 272h1v1h-1zM146 272h1v1h-1zM208 272h2v1h-2zM271 272h1v1h-1zM275 272h2v1h-2zM312 272h1v1h-1zM342 272h1v1h-1zM378 272h3v1h-3zM451 272h2v1h-2zM107 273h1v1h-1zM146 273h1v1h-1zM173 273h2v1h-2zM188 273h1v1h-1zM274 273h1v1h-1zM312 273h1v1h-1zM340 273h2v1h-2zM391 273h1v1h-1zM409 273h1v1h-1zM428 273h1v1h-1zM447 273h1v1h-1zM456 273h1v1h-1zM465 273h1v1h-1zM484 273h1v1h-1zM502 273h1v1h-1zM106 274h1v1h-1zM172 274h1v1h-1zM188 274h1v1h-1zM239 274h2v1h-2zM305 274h2v1h-2zM312 274h1v1h-1zM366 274h1v1h-1zM384 274h3v1h-3zM391 274h1v1h-1zM409 274h1v1h-1zM428 274h1v1h-1zM447 274h1v1h-1zM457 274h2v1h-2zM465 274h1v1h-1zM484 274h1v1h-1zM502 274h1v1h-1zM104 275h1v1h-1zM138 275h1v1h-1zM188 275h1v1h-1zM204 275h1v1h-1zM229 275h1v1h-1zM238 275h1v1h-1zM304 275h1v1h-1zM364 275h2v1h-2zM390 275h2v1h-2zM409 275h1v1h-1zM428 275h1v1h-1zM447 275h1v1h-1zM462 275h1v1h-1zM465 275h1v1h-1zM484 275h1v1h-1zM502 275h1v1h-1zM104 276h1v1h-1zM136 276h2v1h-2zM202 276h2v1h-2zM229 276h1v1h-1zM269 276h3v1h-3zM336 276h1v1h-1zM389 276h4v1h-4zM463 276h2v1h-2zM104 277h1v1h-1zM146 277h1v1h-1zM167 277h2v1h-2zM229 277h1v1h-1zM268 277h1v1h-1zM271 277h1v1h-1zM335 277h1v1h-1zM396 277h1v1h-1zM468 277h1v1h-1zM146 278h1v1h-1zM166 278h1v1h-1zM233 278h2v1h-2zM271 278h1v1h-1zM299 278h2v1h-2zM312 278h1v1h-1zM334 278h1v1h-1zM360 278h1v1h-1zM397 278h2v1h-2zM469 278h2v1h-2zM132 279h1v1h-1zM146 279h1v1h-1zM188 279h1v1h-1zM198 279h1v1h-1zM232 279h1v1h-1zM298 279h1v1h-1zM312 279h1v1h-1zM359 279h1v1h-1zM385 279h1v1h-1zM402 279h1v1h-1zM409 279h1v1h-1zM428 279h1v1h-1zM447 279h1v1h-1zM465 279h1v1h-1zM474 279h2v1h-2zM484 279h1v1h-1zM502 279h1v1h-1zM130 280h2v1h-2zM188 280h1v1h-1zM196 280h2v1h-2zM264 280h1v1h-1zM312 280h1v1h-1zM330 280h1v1h-1zM358 280h1v1h-1zM383 280h2v1h-2zM403 280h2v1h-2zM409 280h1v1h-1zM428 280h1v1h-1zM447 280h1v1h-1zM465 280h1v1h-1zM476 280h1v1h-1zM484 280h1v1h-1zM502 280h1v1h-1zM104 281h1v1h-1zM161 281h2v1h-2zM188 281h1v1h-1zM229 281h1v1h-1zM262 281h2v1h-2zM329 281h1v1h-1zM408 281h2v1h-2zM428 281h1v1h-1zM447 281h1v1h-1zM465 281h1v1h-1zM480 281h2v1h-2zM484 281h1v1h-1zM502 281h1v1h-1zM104 282h1v1h-1zM160 282h1v1h-1zM227 282h3v1h-3zM271 282h1v1h-1zM293 282h2v1h-2zM328 282h1v1h-1zM354 282h1v1h-1zM407 282h2v1h-2zM410 282h1v1h-1zM482 282h1v1h-1zM104 283h1v1h-1zM126 283h1v1h-1zM146 283h1v1h-1zM192 283h1v1h-1zM226 283h1v1h-1zM229 283h1v1h-1zM271 283h1v1h-1zM292 283h1v1h-1zM353 283h1v1h-1zM379 283h1v1h-1zM414 283h2v1h-2zM486 283h2v1h-2zM124 284h2v1h-2zM146 284h1v1h-1zM191 284h1v1h-1zM258 284h1v1h-1zM271 284h1v1h-1zM312 284h1v1h-1zM324 284h1v1h-1zM352 284h1v1h-1zM378 284h1v1h-1zM416 284h1v1h-1zM488 284h1v1h-1zM146 285h1v1h-1zM156 285h1v1h-1zM188 285h1v1h-1zM190 285h1v1h-1zM256 285h2v1h-2zM312 285h1v1h-1zM323 285h1v1h-1zM377 285h1v1h-1zM403 285h1v1h-1zM420 285h2v1h-2zM428 285h1v1h-1zM447 285h1v1h-1zM465 285h1v1h-1zM484 285h1v1h-1zM492 285h3v1h-3zM502 285h1v1h-1zM154 286h2v1h-2zM188 286h1v1h-1zM221 286h2v1h-2zM288 286h1v1h-1zM312 286h1v1h-1zM322 286h1v1h-1zM348 286h1v1h-1zM401 286h2v1h-2zM422 286h1v1h-1zM428 286h1v1h-1zM447 286h1v1h-1zM465 286h1v1h-1zM484 286h1v1h-1zM502 286h1v1h-1zM104 287h1v1h-1zM120 287h1v1h-1zM186 287h1v1h-1zM188 287h1v1h-1zM220 287h1v1h-1zM229 287h1v1h-1zM286 287h2v1h-2zM347 287h1v1h-1zM373 287h1v1h-1zM426 287h3v1h-3zM447 287h1v1h-1zM465 287h1v1h-1zM484 287h1v1h-1zM498 287h3v1h-3zM502 287h1v1h-1zM104 288h1v1h-1zM118 288h2v1h-2zM185 288h1v1h-1zM229 288h1v1h-1zM252 288h1v1h-1zM271 288h1v1h-1zM318 288h1v1h-1zM346 288h1v1h-1zM372 288h1v1h-1zM426 288h3v1h-3zM104 289h1v1h-1zM146 289h1v1h-1zM150 289h1v1h-1zM184 289h1v1h-1zM229 289h1v1h-1zM250 289h2v1h-2zM271 289h1v1h-1zM317 289h1v1h-1zM371 289h1v1h-1zM397 289h1v1h-1zM432 289h3v1h-3zM146 290h1v1h-1zM148 290h2v1h-2zM216 290h1v1h-1zM271 290h1v1h-1zM282 290h1v1h-1zM312 290h1v1h-1zM316 290h1v1h-1zM342 290h1v1h-1zM396 290h1v1h-1zM114 291h1v1h-1zM146 291h1v1h-1zM180 291h1v1h-1zM188 291h1v1h-1zM214 291h2v1h-2zM280 291h2v1h-2zM312 291h1v1h-1zM341 291h1v1h-1zM367 291h1v1h-1zM395 291h1v1h-1zM422 291h1v1h-1zM438 291h3v1h-3zM447 291h1v1h-1zM465 291h1v1h-1zM484 291h1v1h-1zM502 291h1v1h-1zM113 292h1v1h-1zM179 292h1v1h-1zM188 292h1v1h-1zM246 292h1v1h-1zM312 292h2v1h-2zM340 292h1v1h-1zM366 292h1v1h-1zM420 292h2v1h-2zM447 292h1v1h-1zM465 292h1v1h-1zM484 292h1v1h-1zM502 292h1v1h-1zM104 293h1v1h-1zM112 293h1v1h-1zM144 293h1v1h-1zM178 293h1v1h-1zM188 293h1v1h-1zM229 293h1v1h-1zM244 293h2v1h-2zM311 293h1v1h-1zM314 293h1v1h-1zM365 293h1v1h-1zM391 293h1v1h-1zM444 293h4v1h-4zM465 293h1v1h-1zM484 293h1v1h-1zM502 293h1v1h-1zM104 294h1v1h-1zM142 294h2v1h-2zM210 294h1v1h-1zM229 294h1v1h-1zM271 294h1v1h-1zM276 294h1v1h-1zM310 294h1v1h-1zM318 294h2v1h-2zM336 294h1v1h-1zM390 294h1v1h-1zM445 294h2v1h-2zM450 294h1v1h-1zM104 295h1v1h-1zM108 295h1v1h-1zM146 295h1v1h-1zM174 295h1v1h-1zM208 295h2v1h-2zM229 295h1v1h-1zM271 295h1v1h-1zM274 295h2v1h-2zM320 295h1v1h-1zM335 295h1v1h-1zM361 295h1v1h-1zM389 295h1v1h-1zM416 295h1v1h-1zM451 295h2v1h-2zM107 296h1v1h-1zM146 296h1v1h-1zM173 296h1v1h-1zM240 296h1v1h-1zM271 296h1v1h-1zM306 296h1v1h-1zM324 296h3v1h-3zM334 296h1v1h-1zM360 296h1v1h-1zM415 296h1v1h-1zM456 296h1v1h-1zM106 297h1v1h-1zM138 297h1v1h-1zM146 297h1v1h-1zM172 297h1v1h-1zM188 297h1v1h-1zM238 297h2v1h-2zM305 297h1v1h-1zM359 297h1v1h-1zM385 297h1v1h-1zM414 297h1v1h-1zM441 297h1v1h-1zM457 297h2v1h-2zM465 297h1v1h-1zM484 297h1v1h-1zM502 297h1v1h-1zM136 298h2v1h-2zM188 298h1v1h-1zM204 298h1v1h-1zM270 298h1v1h-1zM304 298h1v1h-1zM330 298h3v1h-3zM384 298h1v1h-1zM439 298h2v1h-2zM462 298h1v1h-1zM465 298h1v1h-1zM484 298h1v1h-1zM502 298h1v1h-1zM104 299h1v1h-1zM168 299h1v1h-1zM188 299h1v1h-1zM202 299h2v1h-2zM229 299h1v1h-1zM268 299h2v1h-2zM329 299h2v1h-2zM383 299h1v1h-1zM410 299h1v1h-1zM463 299h3v1h-3zM484 299h1v1h-1zM502 299h1v1h-1zM104 300h1v1h-1zM167 300h1v1h-1zM229 300h1v1h-1zM234 300h1v1h-1zM271 300h1v1h-1zM328 300h1v1h-1zM336 300h3v1h-3zM354 300h2v1h-2zM409 300h1v1h-1zM463 300h2v1h-2zM468 300h1v1h-1zM104 301h1v1h-1zM132 301h1v1h-1zM146 301h1v1h-1zM166 301h1v1h-1zM229 301h1v1h-1zM232 301h2v1h-2zM271 301h1v1h-1zM299 301h2v1h-2zM342 301h1v1h-1zM353 301h1v1h-1zM379 301h1v1h-1zM408 301h1v1h-1zM435 301h1v1h-1zM469 301h2v1h-2zM130 302h2v1h-2zM146 302h1v1h-1zM198 302h1v1h-1zM264 302h1v1h-1zM271 302h1v1h-1zM298 302h1v1h-1zM343 302h2v1h-2zM378 302h1v1h-1zM434 302h1v1h-1zM474 302h2v1h-2zM146 303h1v1h-1zM188 303h1v1h-1zM196 303h2v1h-2zM263 303h1v1h-1zM323 303h2v1h-2zM348 303h1v1h-1zM377 303h1v1h-1zM404 303h1v1h-1zM433 303h1v1h-1zM459 303h1v1h-1zM476 303h1v1h-1zM484 303h1v1h-1zM502 303h1v1h-1zM161 304h2v1h-2zM188 304h1v1h-1zM228 304h1v1h-1zM262 304h1v1h-1zM322 304h1v1h-1zM348 304h3v1h-3zM403 304h1v1h-1zM457 304h2v1h-2zM480 304h2v1h-2zM484 304h1v1h-1zM502 304h1v1h-1zM104 305h1v1h-1zM126 305h1v1h-1zM160 305h1v1h-1zM188 305h1v1h-1zM227 305h1v1h-1zM229 305h1v1h-1zM293 305h2v1h-2zM347 305h1v1h-1zM354 305h1v1h-1zM402 305h1v1h-1zM429 305h1v1h-1zM482 305h1v1h-1zM484 305h1v1h-1zM502 305h1v1h-1zM104 306h1v1h-1zM124 306h2v1h-2zM192 306h1v1h-1zM226 306h1v1h-1zM229 306h1v1h-1zM258 306h1v1h-1zM271 306h1v1h-1zM292 306h1v1h-1zM355 306h2v1h-2zM372 306h2v1h-2zM428 306h1v1h-1zM482 306h2v1h-2zM486 306h2v1h-2zM104 307h1v1h-1zM146 307h1v1h-1zM191 307h1v1h-1zM229 307h1v1h-1zM257 307h1v1h-1zM271 307h1v1h-1zM317 307h2v1h-2zM360 307h2v1h-2zM371 307h1v1h-1zM398 307h1v1h-1zM427 307h1v1h-1zM453 307h1v1h-1zM488 307h1v1h-1zM146 308h1v1h-1zM155 308h2v1h-2zM190 308h1v1h-1zM222 308h1v1h-1zM256 308h1v1h-1zM271 308h1v1h-1zM316 308h1v1h-1zM342 308h2v1h-2zM362 308h1v1h-1zM397 308h1v1h-1zM452 308h1v1h-1zM492 308h3v1h-3zM120 309h1v1h-1zM146 309h1v1h-1zM154 309h1v1h-1zM188 309h1v1h-1zM221 309h1v1h-1zM287 309h2v1h-2zM341 309h1v1h-1zM366 309h2v1h-2zM396 309h1v1h-1zM423 309h1v1h-1zM451 309h1v1h-1zM478 309h1v1h-1zM502 309h1v1h-1zM119 310h1v1h-1zM186 310h1v1h-1zM188 310h1v1h-1zM220 310h1v1h-1zM252 310h1v1h-1zM286 310h1v1h-1zM366 310h3v1h-3zM422 310h1v1h-1zM476 310h2v1h-2zM498 310h3v1h-3zM502 310h1v1h-1zM104 311h1v1h-1zM118 311h1v1h-1zM185 311h1v1h-1zM188 311h1v1h-1zM229 311h1v1h-1zM251 311h1v1h-1zM311 311h2v1h-2zM365 311h1v1h-1zM372 311h2v1h-2zM421 311h1v1h-1zM447 311h1v1h-1zM502 311h1v1h-1zM104 312h1v1h-1zM149 312h2v1h-2zM184 312h1v1h-1zM216 312h1v1h-1zM229 312h1v1h-1zM250 312h1v1h-1zM271 312h1v1h-1zM310 312h1v1h-1zM337 312h1v1h-1zM374 312h1v1h-1zM391 312h2v1h-2zM446 312h1v1h-1zM500 312h2v1h-2zM104 313h1v1h-1zM114 313h1v1h-1zM146 313h1v1h-1zM148 313h1v1h-1zM215 313h1v1h-1zM229 313h1v1h-1zM271 313h1v1h-1zM281 313h2v1h-2zM335 313h2v1h-2zM378 313h3v1h-3zM390 313h1v1h-1zM417 313h1v1h-1zM445 313h1v1h-1zM472 313h1v1h-1zM113 314h1v1h-1zM146 314h1v1h-1zM180 314h1v1h-1zM214 314h1v1h-1zM246 314h1v1h-1zM271 314h1v1h-1zM280 314h1v1h-1zM360 314h2v1h-2zM416 314h1v1h-1zM470 314h2v1h-2zM112 315h1v1h-1zM146 315h1v1h-1zM179 315h1v1h-1zM188 315h1v1h-1zM245 315h1v1h-1zM305 315h2v1h-2zM359 315h1v1h-1zM384 315h3v1h-3zM415 315h1v1h-1zM441 315h1v1h-1zM496 315h1v1h-1zM143 316h2v1h-2zM178 316h1v1h-1zM188 316h1v1h-1zM210 316h1v1h-1zM244 316h1v1h-1zM304 316h1v1h-1zM331 316h1v1h-1zM385 316h2v1h-2zM440 316h1v1h-1zM494 316h2v1h-2zM104 317h1v1h-1zM108 317h1v1h-1zM142 317h1v1h-1zM188 317h1v1h-1zM209 317h1v1h-1zM229 317h1v1h-1zM275 317h2v1h-2zM329 317h2v1h-2zM384 317h1v1h-1zM390 317h3v1h-3zM411 317h1v1h-1zM439 317h1v1h-1zM466 317h1v1h-1zM104 318h1v1h-1zM107 318h1v1h-1zM174 318h1v1h-1zM208 318h1v1h-1zM229 318h1v1h-1zM271 318h1v1h-1zM274 318h1v1h-1zM355 318h1v1h-1zM396 318h1v1h-1zM410 318h1v1h-1zM465 318h1v1h-1zM104 319h1v1h-1zM106 319h1v1h-1zM146 319h1v1h-1zM173 319h1v1h-1zM229 319h1v1h-1zM239 319h2v1h-2zM271 319h1v1h-1zM300 319h1v1h-1zM353 319h2v1h-2zM397 319h2v1h-2zM409 319h1v1h-1zM435 319h1v1h-1zM464 319h1v1h-1zM490 319h1v1h-1zM138 320h1v1h-1zM146 320h1v1h-1zM172 320h1v1h-1zM204 320h1v1h-1zM238 320h1v1h-1zM271 320h2v1h-2zM298 320h2v1h-2zM325 320h1v1h-1zM379 320h2v1h-2zM402 320h1v1h-1zM434 320h1v1h-1zM489 320h1v1h-1zM136 321h2v1h-2zM146 321h1v1h-1zM188 321h1v1h-1zM203 321h1v1h-1zM269 321h2v1h-2zM273 321h1v1h-1zM323 321h2v1h-2zM378 321h1v1h-1zM403 321h2v1h-2zM433 321h1v1h-1zM460 321h1v1h-1zM488 321h1v1h-1zM168 322h1v1h-1zM188 322h1v1h-1zM202 322h1v1h-1zM268 322h1v1h-1zM277 322h2v1h-2zM349 322h1v1h-1zM404 322h2v1h-2zM408 322h1v1h-1zM459 322h1v1h-1zM104 323h1v1h-1zM167 323h1v1h-1zM188 323h1v1h-1zM229 323h1v1h-1zM233 323h2v1h-2zM279 323h1v1h-1zM294 323h1v1h-1zM347 323h2v1h-2zM403 323h1v1h-1zM409 323h2v1h-2zM458 323h1v1h-1zM484 323h1v1h-1zM104 324h1v1h-1zM132 324h1v1h-1zM166 324h1v1h-1zM198 324h1v1h-1zM229 324h1v1h-1zM232 324h1v1h-1zM283 324h3v1h-3zM292 324h2v1h-2zM319 324h1v1h-1zM374 324h1v1h-1zM414 324h2v1h-2zM428 324h2v1h-2zM483 324h1v1h-1zM104 325h1v1h-1zM130 325h2v1h-2zM146 325h1v1h-1zM197 325h1v1h-1zM229 325h1v1h-1zM264 325h1v1h-1zM318 325h1v1h-1zM372 325h2v1h-2zM416 325h1v1h-1zM427 325h1v1h-1zM454 325h1v1h-1zM482 325h1v1h-1zM146 326h1v1h-1zM196 326h1v1h-1zM262 326h2v1h-2zM289 326h3v1h-3zM317 326h1v1h-1zM343 326h1v1h-1zM398 326h2v1h-2zM420 326h2v1h-2zM453 326h1v1h-1zM146 327h1v1h-1zM161 327h2v1h-2zM188 327h1v1h-1zM227 327h2v1h-2zM288 327h1v1h-1zM341 327h2v1h-2zM397 327h1v1h-1zM422 327h1v1h-1zM452 327h1v1h-1zM478 327h1v1h-1zM126 328h1v1h-1zM160 328h1v1h-1zM188 328h1v1h-1zM226 328h1v1h-1zM286 328h2v1h-2zM295 328h3v1h-3zM313 328h1v1h-1zM368 328h1v1h-1zM422 328h2v1h-2zM426 328h2v1h-2zM477 328h1v1h-1zM104 329h1v1h-1zM124 329h2v1h-2zM188 329h1v1h-1zM191 329h2v1h-2zM229 329h1v1h-1zM258 329h1v1h-1zM312 329h1v1h-1zM366 329h2v1h-2zM421 329h1v1h-1zM428 329h1v1h-1zM448 329h1v1h-1zM476 329h1v1h-1zM104 330h1v1h-1zM190 330h1v1h-1zM229 330h1v1h-1zM256 330h2v1h-2zM301 330h3v1h-3zM311 330h1v1h-1zM337 330h1v1h-1zM392 330h2v1h-2zM432 330h3v1h-3zM447 330h1v1h-1zM104 331h1v1h-1zM146 331h1v1h-1zM155 331h2v1h-2zM221 331h2v1h-2zM229 331h1v1h-1zM282 331h1v1h-1zM307 331h1v1h-1zM336 331h1v1h-1zM391 331h1v1h-1zM446 331h1v1h-1zM472 331h1v1h-1zM120 332h1v1h-1zM146 332h1v1h-1zM154 332h1v1h-1zM220 332h1v1h-1zM280 332h2v1h-2zM307 332h3v1h-3zM335 332h1v1h-1zM362 332h1v1h-1zM416 332h2v1h-2zM438 332h3v1h-3zM471 332h1v1h-1zM118 333h2v1h-2zM146 333h1v1h-1zM185 333h2v1h-2zM188 333h1v1h-1zM252 333h1v1h-1zM306 333h1v1h-1zM313 333h1v1h-1zM360 333h2v1h-2zM415 333h1v1h-1zM442 333h1v1h-1zM470 333h1v1h-1zM184 334h1v1h-1zM188 334h1v1h-1zM250 334h2v1h-2zM305 334h1v1h-1zM314 334h2v1h-2zM331 334h1v1h-1zM386 334h2v1h-2zM441 334h1v1h-1zM444 334h3v1h-3zM104 335h1v1h-1zM149 335h2v1h-2zM188 335h1v1h-1zM216 335h1v1h-1zM229 335h1v1h-1zM276 335h1v1h-1zM319 335h1v1h-1zM330 335h1v1h-1zM385 335h1v1h-1zM440 335h1v1h-1zM466 335h1v1h-1zM104 336h1v1h-1zM114 336h1v1h-1zM148 336h1v1h-1zM214 336h2v1h-2zM229 336h1v1h-1zM275 336h1v1h-1zM301 336h1v1h-1zM320 336h2v1h-2zM329 336h1v1h-1zM356 336h1v1h-1zM411 336h1v1h-1zM450 336h3v1h-3zM465 336h1v1h-1zM104 337h1v1h-1zM113 337h1v1h-1zM146 337h1v1h-1zM179 337h2v1h-2zM229 337h1v1h-1zM246 337h1v1h-1zM274 337h1v1h-1zM300 337h1v1h-1zM325 337h2v1h-2zM355 337h1v1h-1zM409 337h2v1h-2zM436 337h1v1h-1zM456 337h1v1h-1zM464 337h1v1h-1zM112 338h1v1h-1zM146 338h1v1h-1zM178 338h1v1h-1zM244 338h2v1h-2zM299 338h1v1h-1zM325 338h1v1h-1zM327 338h1v1h-1zM354 338h1v1h-1zM381 338h1v1h-1zM435 338h1v1h-1zM457 338h2v1h-2zM143 339h2v1h-2zM146 339h1v1h-1zM188 339h1v1h-1zM210 339h1v1h-1zM270 339h1v1h-1zM324 339h1v1h-1zM331 339h2v1h-2zM379 339h2v1h-2zM434 339h1v1h-1zM108 340h1v1h-1zM142 340h1v1h-1zM188 340h1v1h-1zM208 340h2v1h-2zM269 340h1v1h-1zM323 340h1v1h-1zM333 340h1v1h-1zM350 340h1v1h-1zM405 340h1v1h-1zM459 340h2v1h-2zM104 341h1v1h-1zM107 341h1v1h-1zM173 341h2v1h-2zM188 341h1v1h-1zM229 341h1v1h-1zM240 341h1v1h-1zM268 341h1v1h-1zM294 341h2v1h-2zM337 341h2v1h-2zM349 341h1v1h-1zM403 341h2v1h-2zM458 341h1v1h-1zM104 342h1v1h-1zM106 342h1v1h-1zM172 342h1v1h-1zM229 342h1v1h-1zM238 342h2v1h-2zM293 342h1v1h-1zM319 342h1v1h-1zM339 342h1v1h-1zM348 342h1v1h-1zM375 342h1v1h-1zM429 342h2v1h-2zM104 343h1v1h-1zM138 343h1v1h-1zM146 343h1v1h-1zM204 343h1v1h-1zM229 343h1v1h-1zM264 343h1v1h-1zM318 343h1v1h-1zM343 343h2v1h-2zM373 343h2v1h-2zM428 343h1v1h-1zM136 344h2v1h-2zM146 344h1v1h-1zM202 344h2v1h-2zM263 344h1v1h-1zM317 344h1v1h-1zM344 344h2v1h-2zM399 344h1v1h-1zM453 344h2v1h-2zM146 345h1v1h-1zM167 345h2v1h-2zM188 345h1v1h-1zM234 345h1v1h-1zM262 345h1v1h-1zM288 345h2v1h-2zM343 345h1v1h-1zM349 345h3v1h-3zM397 345h2v1h-2zM452 345h1v1h-1zM166 346h1v1h-1zM188 346h1v1h-1zM232 346h2v1h-2zM287 346h1v1h-1zM342 346h1v1h-1zM369 346h1v1h-1zM423 346h2v1h-2zM104 347h1v1h-1zM132 347h1v1h-1zM188 347h1v1h-1zM198 347h1v1h-1zM229 347h1v1h-1zM258 347h1v1h-1zM312 347h2v1h-2zM355 347h3v1h-3zM367 347h2v1h-2zM422 347h1v1h-1zM104 348h1v1h-1zM130 348h2v1h-2zM196 348h2v1h-2zM229 348h1v1h-1zM257 348h1v1h-1zM311 348h1v1h-1zM338 348h1v1h-1zM393 348h1v1h-1zM447 348h2v1h-2zM104 349h1v1h-1zM146 349h1v1h-1zM161 349h2v1h-2zM228 349h3v1h-3zM256 349h1v1h-1zM282 349h2v1h-2zM337 349h1v1h-1zM361 349h3v1h-3zM392 349h1v1h-1zM446 349h1v1h-1zM146 350h1v1h-1zM160 350h1v1h-1zM227 350h1v1h-1zM231 350h1v1h-1zM281 350h1v1h-1zM336 350h1v1h-1zM363 350h1v1h-1zM367 350h1v1h-1zM391 350h1v1h-1zM417 350h2v1h-2zM126 351h1v1h-1zM146 351h1v1h-1zM188 351h1v1h-1zM192 351h1v1h-1zM226 351h1v1h-1zM235 351h3v1h-3zM252 351h1v1h-1zM306 351h2v1h-2zM361 351h2v1h-2zM368 351h2v1h-2zM416 351h1v1h-1zM124 352h2v1h-2zM188 352h1v1h-1zM191 352h1v1h-1zM251 352h1v1h-1zM305 352h1v1h-1zM373 352h1v1h-1zM387 352h1v1h-1zM441 352h2v1h-2zM104 353h1v1h-1zM156 353h1v1h-1zM188 353h1v1h-1zM190 353h1v1h-1zM222 353h1v1h-1zM241 353h3v1h-3zM250 353h1v1h-1zM277 353h1v1h-1zM331 353h2v1h-2zM374 353h2v1h-2zM386 353h1v1h-1zM440 353h1v1h-1zM104 354h1v1h-1zM154 354h2v1h-2zM221 354h1v1h-1zM275 354h2v1h-2zM330 354h1v1h-1zM357 354h1v1h-1zM379 354h1v1h-1zM385 354h1v1h-1zM411 354h2v1h-2zM104 355h1v1h-1zM120 355h1v1h-1zM146 355h1v1h-1zM186 355h1v1h-1zM220 355h1v1h-1zM247 355h3v1h-3zM300 355h2v1h-2zM356 355h1v1h-1zM380 355h2v1h-2zM410 355h1v1h-1zM118 356h2v1h-2zM146 356h1v1h-1zM185 356h1v1h-1zM245 356h2v1h-2zM253 356h1v1h-1zM299 356h1v1h-1zM355 356h1v1h-1zM381 356h1v1h-1zM385 356h1v1h-1zM435 356h2v1h-2zM146 357h1v1h-1zM150 357h1v1h-1zM184 357h1v1h-1zM188 357h1v1h-1zM216 357h1v1h-1zM244 357h1v1h-1zM254 357h2v1h-2zM271 357h1v1h-1zM325 357h2v1h-2zM380 357h1v1h-1zM386 357h2v1h-2zM434 357h1v1h-1zM148 358h2v1h-2zM188 358h1v1h-1zM215 358h1v1h-1zM259 358h1v1h-1zM269 358h2v1h-2zM324 358h1v1h-1zM351 358h1v1h-1zM379 358h1v1h-1zM391 358h2v1h-2zM405 358h2v1h-2zM104 359h1v1h-1zM114 359h1v1h-1zM180 359h1v1h-1zM188 359h1v1h-1zM214 359h1v1h-1zM260 359h2v1h-2zM295 359h1v1h-1zM350 359h1v1h-1zM393 359h1v1h-1zM404 359h1v1h-1zM104 360h1v1h-1zM113 360h1v1h-1zM179 360h1v1h-1zM239 360h2v1h-2zM265 360h2v1h-2zM293 360h2v1h-2zM349 360h1v1h-1zM375 360h1v1h-1zM397 360h2v1h-2zM430 360h1v1h-1zM104 361h1v1h-1zM112 361h1v1h-1zM144 361h1v1h-1zM146 361h1v1h-1zM178 361h1v1h-1zM210 361h1v1h-1zM238 361h1v1h-1zM265 361h1v1h-1zM267 361h1v1h-1zM319 361h2v1h-2zM374 361h1v1h-1zM399 361h1v1h-1zM428 361h2v1h-2zM142 362h2v1h-2zM146 362h1v1h-1zM209 362h1v1h-1zM263 362h2v1h-2zM271 362h2v1h-2zM318 362h1v1h-1zM345 362h1v1h-1zM373 362h1v1h-1zM399 362h2v1h-2zM403 362h2v1h-2zM108 363h1v1h-1zM146 363h1v1h-1zM174 363h1v1h-1zM188 363h1v1h-1zM208 363h1v1h-1zM273 363h1v1h-1zM289 363h1v1h-1zM344 363h1v1h-1zM398 363h1v1h-1zM405 363h1v1h-1zM107 364h1v1h-1zM173 364h1v1h-1zM188 364h1v1h-1zM233 364h2v1h-2zM277 364h3v1h-3zM287 364h2v1h-2zM343 364h1v1h-1zM409 364h3v1h-3zM424 364h1v1h-1zM104 365h1v1h-1zM106 365h1v1h-1zM138 365h1v1h-1zM172 365h1v1h-1zM188 365h1v1h-1zM204 365h1v1h-1zM232 365h1v1h-1zM259 365h1v1h-1zM314 365h1v1h-1zM368 365h2v1h-2zM422 365h2v1h-2zM104 366h1v1h-1zM136 366h2v1h-2zM203 366h1v1h-1zM257 366h2v1h-2zM283 366h3v1h-3zM312 366h2v1h-2zM339 366h1v1h-1zM367 366h1v1h-1zM394 366h1v1h-1zM415 366h3v1h-3zM104 367h1v1h-1zM146 367h1v1h-1zM168 367h1v1h-1zM202 367h1v1h-1zM283 367h1v1h-1zM338 367h1v1h-1zM392 367h2v1h-2zM146 368h1v1h-1zM167 368h1v1h-1zM227 368h2v1h-2zM281 368h2v1h-2zM289 368h3v1h-3zM337 368h1v1h-1zM418 368h1v1h-1zM132 369h1v1h-1zM146 369h1v1h-1zM166 369h1v1h-1zM188 369h1v1h-1zM198 369h1v1h-1zM226 369h1v1h-1zM253 369h1v1h-1zM295 369h1v1h-1zM308 369h1v1h-1zM362 369h2v1h-2zM416 369h2v1h-2zM130 370h2v1h-2zM188 370h1v1h-1zM197 370h1v1h-1zM252 370h1v1h-1zM296 370h2v1h-2zM306 370h2v1h-2zM361 370h1v1h-1zM388 370h1v1h-1zM104 371h1v1h-1zM188 371h1v1h-1zM196 371h1v1h-1zM251 371h1v1h-1zM277 371h1v1h-1zM301 371h1v1h-1zM332 371h2v1h-2zM386 371h2v1h-2zM104 372h1v1h-1zM161 372h2v1h-2zM221 372h2v1h-2zM275 372h2v1h-2zM302 372h2v1h-2zM331 372h1v1h-1zM412 372h1v1h-1zM104 373h1v1h-1zM126 373h1v1h-1zM146 373h1v1h-1zM160 373h1v1h-1zM220 373h1v1h-1zM247 373h1v1h-1zM302 373h1v1h-1zM307 373h2v1h-2zM356 373h2v1h-2zM410 373h2v1h-2zM124 374h2v1h-2zM146 374h1v1h-1zM191 374h2v1h-2zM246 374h1v1h-1zM300 374h2v1h-2zM309 374h1v1h-1zM355 374h1v1h-1zM382 374h1v1h-1zM146 375h1v1h-1zM188 375h1v1h-1zM190 375h1v1h-1zM245 375h1v1h-1zM271 375h1v1h-1zM313 375h2v1h-2zM326 375h2v1h-2zM380 375h2v1h-2zM155 376h2v1h-2zM188 376h1v1h-1zM216 376h1v1h-1zM270 376h1v1h-1zM315 376h1v1h-1zM325 376h1v1h-1zM406 376h1v1h-1zM104 377h1v1h-1zM120 377h1v1h-1zM154 377h1v1h-1zM188 377h2v1h-2zM214 377h2v1h-2zM241 377h1v1h-1zM269 377h1v1h-1zM296 377h1v1h-1zM319 377h3v1h-3zM351 377h1v1h-1zM405 377h1v1h-1zM104 378h1v1h-1zM119 378h1v1h-1zM185 378h2v1h-2zM190 378h1v1h-1zM240 378h1v1h-1zM294 378h2v1h-2zM349 378h2v1h-2zM376 378h1v1h-1zM404 378h1v1h-1zM104 379h1v1h-1zM118 379h1v1h-1zM146 379h1v1h-1zM184 379h1v1h-1zM194 379h2v1h-2zM239 379h1v1h-1zM265 379h1v1h-1zM320 379h2v1h-2zM325 379h3v1h-3zM374 379h2v1h-2zM146 380h1v1h-1zM149 380h2v1h-2zM196 380h1v1h-1zM210 380h1v1h-1zM264 380h1v1h-1zM319 380h1v1h-1zM331 380h1v1h-1zM400 380h1v1h-1zM114 381h1v1h-1zM146 381h1v1h-1zM148 381h1v1h-1zM200 381h3v1h-3zM208 381h2v1h-2zM263 381h1v1h-1zM290 381h1v1h-1zM332 381h2v1h-2zM345 381h1v1h-1zM399 381h1v1h-1zM113 382h1v1h-1zM179 382h2v1h-2zM234 382h2v1h-2zM289 382h1v1h-1zM337 382h1v1h-1zM343 382h2v1h-2zM370 382h1v1h-1zM398 382h1v1h-1zM104 383h1v1h-1zM112 383h1v1h-1zM178 383h1v1h-1zM206 383h3v1h-3zM233 383h1v1h-1zM259 383h1v1h-1zM288 383h1v1h-1zM314 383h2v1h-2zM338 383h2v1h-2zM368 383h2v1h-2zM104 384h1v1h-1zM143 384h2v1h-2zM204 384h1v1h-1zM258 384h1v1h-1zM313 384h1v1h-1zM343 384h1v1h-1zM394 384h1v1h-1zM104 385h1v1h-1zM108 385h1v1h-1zM142 385h1v1h-1zM146 385h1v1h-1zM202 385h2v1h-2zM212 385h3v1h-3zM257 385h1v1h-1zM284 385h1v1h-1zM339 385h1v1h-1zM344 385h2v1h-2zM393 385h1v1h-1zM107 386h1v1h-1zM146 386h1v1h-1zM173 386h2v1h-2zM228 386h2v1h-2zM283 386h1v1h-1zM337 386h2v1h-2zM349 386h2v1h-2zM364 386h1v1h-1zM392 386h1v1h-1zM106 387h1v1h-1zM146 387h1v1h-1zM172 387h1v1h-1zM218 387h3v1h-3zM227 387h1v1h-1zM282 387h1v1h-1zM309 387h1v1h-1zM351 387h1v1h-1zM362 387h2v1h-2zM138 388h1v1h-1zM198 388h1v1h-1zM224 388h1v1h-1zM252 388h2v1h-2zM307 388h2v1h-2zM355 388h2v1h-2zM388 388h1v1h-1zM104 389h1v1h-1zM136 389h2v1h-2zM196 389h2v1h-2zM225 389h2v1h-2zM251 389h1v1h-1zM278 389h1v1h-1zM333 389h1v1h-1zM357 389h1v1h-1zM387 389h1v1h-1zM104 390h1v1h-1zM167 390h2v1h-2zM222 390h2v1h-2zM230 390h1v1h-1zM277 390h1v1h-1zM331 390h2v1h-2zM358 390h1v1h-1zM361 390h3v1h-3zM386 390h1v1h-1zM104 391h1v1h-1zM146 391h1v1h-1zM166 391h1v1h-1zM221 391h1v1h-1zM231 391h2v1h-2zM276 391h1v1h-1zM303 391h1v1h-1zM357 391h1v1h-1zM132 392h1v1h-1zM146 392h1v1h-1zM192 392h1v1h-1zM236 392h1v1h-1zM246 392h2v1h-2zM301 392h2v1h-2zM356 392h1v1h-1zM367 392h3v1h-3zM382 392h1v1h-1zM130 393h2v1h-2zM146 393h1v1h-1zM191 393h1v1h-1zM237 393h2v1h-2zM245 393h1v1h-1zM327 393h1v1h-1zM373 393h1v1h-1zM381 393h1v1h-1zM161 394h2v1h-2zM190 394h1v1h-1zM216 394h2v1h-2zM242 394h2v1h-2zM271 394h2v1h-2zM326 394h1v1h-1zM352 394h1v1h-1zM374 394h2v1h-2zM380 394h1v1h-1zM104 395h1v1h-1zM160 395h1v1h-1zM215 395h1v1h-1zM244 395h1v1h-1zM270 395h1v1h-1zM297 395h1v1h-1zM325 395h1v1h-1zM351 395h1v1h-1zM104 396h1v1h-1zM126 396h1v1h-1zM186 396h1v1h-1zM240 396h2v1h-2zM248 396h2v1h-2zM295 396h2v1h-2zM350 396h1v1h-1zM104 397h1v1h-1zM124 397h2v1h-2zM146 397h1v1h-1zM185 397h1v1h-1zM239 397h1v1h-1zM250 397h1v1h-1zM321 397h1v1h-1zM375 397h2v1h-2zM146 398h1v1h-1zM156 398h1v1h-1zM184 398h1v1h-1zM211 398h1v1h-1zM254 398h2v1h-2zM265 398h2v1h-2zM320 398h1v1h-1zM346 398h1v1h-1zM374 398h1v1h-1zM146 399h1v1h-1zM154 399h2v1h-2zM209 399h2v1h-2zM256 399h1v1h-1zM264 399h1v1h-1zM291 399h1v1h-1zM319 399h1v1h-1zM345 399h1v1h-1zM120 400h1v1h-1zM180 400h1v1h-1zM234 400h2v1h-2zM260 400h2v1h-2zM289 400h2v1h-2zM344 400h1v1h-1zM104 401h1v1h-1zM118 401h2v1h-2zM179 401h1v1h-1zM233 401h1v1h-1zM262 401h1v1h-1zM315 401h1v1h-1zM369 401h2v1h-2zM104 402h1v1h-1zM150 402h1v1h-1zM178 402h1v1h-1zM205 402h1v1h-1zM259 402h2v1h-2zM266 402h3v1h-3zM314 402h1v1h-1zM340 402h1v1h-1zM368 402h1v1h-1zM104 403h1v1h-1zM146 403h1v1h-1zM148 403h2v1h-2zM203 403h2v1h-2zM258 403h1v1h-1zM285 403h1v1h-1zM313 403h1v1h-1zM339 403h1v1h-1zM114 404h1v1h-1zM146 404h1v1h-1zM174 404h1v1h-1zM229 404h1v1h-1zM272 404h3v1h-3zM284 404h1v1h-1zM338 404h1v1h-1zM113 405h1v1h-1zM146 405h2v1h-2zM173 405h1v1h-1zM227 405h2v1h-2zM283 405h1v1h-1zM363 405h2v1h-2zM112 406h1v1h-1zM144 406h1v1h-1zM148 406h1v1h-1zM172 406h1v1h-1zM199 406h1v1h-1zM253 406h2v1h-2zM278 406h3v1h-3zM308 406h2v1h-2zM334 406h1v1h-1zM362 406h1v1h-1zM104 407h1v1h-1zM142 407h2v1h-2zM152 407h2v1h-2zM197 407h2v1h-2zM252 407h1v1h-1zM279 407h1v1h-1zM284 407h1v1h-1zM307 407h1v1h-1zM333 407h1v1h-1zM104 408h1v1h-1zM108 408h1v1h-1zM154 408h1v1h-1zM168 408h1v1h-1zM223 408h1v1h-1zM278 408h1v1h-1zM285 408h2v1h-2zM332 408h1v1h-1zM104 409h1v1h-1zM107 409h1v1h-1zM158 409h3v1h-3zM167 409h1v1h-1zM221 409h2v1h-2zM277 409h1v1h-1zM290 409h1v1h-1zM357 409h2v1h-2zM106 410h1v1h-1zM138 410h1v1h-1zM166 410h1v1h-1zM193 410h1v1h-1zM248 410h1v1h-1zM291 410h2v1h-2zM302 410h2v1h-2zM328 410h1v1h-1zM356 410h1v1h-1zM136 411h2v1h-2zM164 411h3v1h-3zM192 411h1v1h-1zM246 411h2v1h-2zM273 411h1v1h-1zM296 411h1v1h-1zM301 411h1v1h-1zM327 411h1v1h-1zM191 412h1v1h-1zM217 412h1v1h-1zM272 412h1v1h-1zM297 412h2v1h-2zM326 412h1v1h-1zM104 413h1v1h-1zM161 413h2v1h-2zM170 413h3v1h-3zM215 413h2v1h-2zM271 413h1v1h-1zM302 413h1v1h-1zM351 413h2v1h-2zM104 414h1v1h-1zM132 414h1v1h-1zM160 414h1v1h-1zM187 414h1v1h-1zM242 414h1v1h-1zM296 414h2v1h-2zM303 414h2v1h-2zM350 414h1v1h-1zM104 415h1v1h-1zM130 415h2v1h-2zM176 415h3v1h-3zM186 415h1v1h-1zM240 415h2v1h-2zM267 415h1v1h-1zM295 415h1v1h-1zM308 415h2v1h-2zM321 415h2v1h-2zM182 416h1v1h-1zM185 416h1v1h-1zM211 416h1v1h-1zM266 416h1v1h-1zM310 416h1v1h-1zM320 416h1v1h-1zM155 417h2v1h-2zM183 417h2v1h-2zM210 417h1v1h-1zM265 417h1v1h-1zM314 417h2v1h-2zM346 417h1v1h-1zM126 418h1v1h-1zM154 418h1v1h-1zM181 418h1v1h-1zM188 418h1v1h-1zM209 418h1v1h-1zM236 418h1v1h-1zM290 418h2v1h-2zM316 418h1v1h-1zM344 418h2v1h-2zM104 419h1v1h-1zM124 419h2v1h-2zM180 419h1v1h-1zM189 419h2v1h-2zM234 419h2v1h-2zM261 419h1v1h-1zM289 419h1v1h-1zM315 419h2v1h-2zM320 419h2v1h-2zM104 420h1v1h-1zM179 420h1v1h-1zM194 420h1v1h-1zM205 420h1v1h-1zM260 420h1v1h-1zM314 420h1v1h-1zM322 420h1v1h-1zM104 421h1v1h-1zM149 421h2v1h-2zM195 421h2v1h-2zM204 421h1v1h-1zM259 421h1v1h-1zM326 421h3v1h-3zM340 421h1v1h-1zM120 422h1v1h-1zM148 422h1v1h-1zM175 422h1v1h-1zM200 422h2v1h-2zM203 422h1v1h-1zM230 422h1v1h-1zM285 422h1v1h-1zM338 422h2v1h-2zM119 423h1v1h-1zM174 423h1v1h-1zM202 423h1v1h-1zM229 423h1v1h-1zM283 423h2v1h-2zM309 423h2v1h-2zM332 423h3v1h-3zM118 424h1v1h-1zM173 424h1v1h-1zM199 424h1v1h-1zM206 424h2v1h-2zM228 424h1v1h-1zM254 424h2v1h-2zM308 424h1v1h-1zM104 425h1v1h-1zM143 425h2v1h-2zM198 425h1v1h-1zM208 425h1v1h-1zM253 425h1v1h-1zM334 425h1v1h-1zM104 426h1v1h-1zM114 426h1v1h-1zM142 426h1v1h-1zM197 426h1v1h-1zM212 426h2v1h-2zM224 426h1v1h-1zM279 426h1v1h-1zM332 426h2v1h-2zM104 427h1v1h-1zM113 427h1v1h-1zM168 427h2v1h-2zM214 427h1v1h-1zM223 427h1v1h-1zM277 427h2v1h-2zM303 427h2v1h-2zM112 428h1v1h-1zM167 428h1v1h-1zM193 428h1v1h-1zM218 428h2v1h-2zM222 428h1v1h-1zM248 428h2v1h-2zM302 428h1v1h-1zM137 429h2v1h-2zM192 429h1v1h-1zM220 429h1v1h-1zM247 429h1v1h-1zM328 429h1v1h-1zM108 430h1v1h-1zM136 430h1v1h-1zM191 430h1v1h-1zM218 430h1v1h-1zM224 430h3v1h-3zM273 430h1v1h-1zM326 430h2v1h-2zM104 431h1v1h-1zM107 431h1v1h-1zM162 431h2v1h-2zM217 431h1v1h-1zM271 431h2v1h-2zM297 431h2v1h-2zM104 432h1v1h-1zM106 432h1v1h-1zM161 432h1v1h-1zM216 432h1v1h-1zM230 432h3v1h-3zM242 432h2v1h-2zM296 432h1v1h-1zM104 433h2v1h-2zM132 433h1v1h-1zM186 433h2v1h-2zM241 433h1v1h-1zM322 433h1v1h-1zM106 434h1v1h-1zM130 434h2v1h-2zM185 434h1v1h-1zM212 434h1v1h-1zM236 434h3v1h-3zM267 434h1v1h-1zM321 434h1v1h-1zM110 435h2v1h-2zM156 435h2v1h-2zM211 435h1v1h-1zM242 435h1v1h-1zM266 435h1v1h-1zM291 435h2v1h-2zM320 435h1v1h-1zM112 436h1v1h-1zM155 436h1v1h-1zM210 436h1v1h-1zM236 436h2v1h-2zM243 436h2v1h-2zM265 436h1v1h-1zM290 436h1v1h-1zM116 437h3v1h-3zM126 437h1v1h-1zM180 437h2v1h-2zM235 437h1v1h-1zM248 437h1v1h-1zM316 437h1v1h-1zM124 438h2v1h-2zM179 438h1v1h-1zM249 438h2v1h-2zM261 438h1v1h-1zM315 438h1v1h-1zM122 439h3v1h-3zM151 439h1v1h-1zM205 439h2v1h-2zM254 439h1v1h-1zM260 439h1v1h-1zM286 439h1v1h-1zM314 439h1v1h-1zM149 440h2v1h-2zM204 440h1v1h-1zM231 440h1v1h-1zM255 440h2v1h-2zM259 440h1v1h-1zM284 440h2v1h-2zM128 441h3v1h-3zM174 441h2v1h-2zM229 441h2v1h-2zM260 441h1v1h-1zM310 441h1v1h-1zM134 442h1v1h-1zM173 442h1v1h-1zM255 442h1v1h-1zM261 442h2v1h-2zM309 442h1v1h-1zM135 443h2v1h-2zM145 443h1v1h-1zM199 443h2v1h-2zM254 443h1v1h-1zM266 443h2v1h-2zM280 443h1v1h-1zM308 443h1v1h-1zM140 444h1v1h-1zM143 444h2v1h-2zM198 444h1v1h-1zM225 444h1v1h-1zM253 444h1v1h-1zM268 444h1v1h-1zM278 444h2v1h-2zM141 445h2v1h-2zM169 445h1v1h-1zM223 445h2v1h-2zM272 445h2v1h-2zM304 445h1v1h-1zM146 446h1v1h-1zM167 446h2v1h-2zM249 446h1v1h-1zM274 446h1v1h-1zM303 446h1v1h-1zM147 447h2v1h-2zM193 447h2v1h-2zM248 447h1v1h-1zM274 447h1v1h-1zM278 447h2v1h-2zM302 447h1v1h-1zM152 448h2v1h-2zM192 448h1v1h-1zM219 448h1v1h-1zM247 448h1v1h-1zM272 448h2v1h-2zM280 448h1v1h-1zM154 449h1v1h-1zM163 449h1v1h-1zM217 449h2v1h-2zM284 449h3v1h-3zM298 449h1v1h-1zM158 450h2v1h-2zM161 450h2v1h-2zM297 450h1v1h-1zM160 451h1v1h-1zM188 451h1v1h-1zM242 451h2v1h-2zM268 451h1v1h-1zM290 451h3v1h-3zM296 451h1v1h-1zM164 452h2v1h-2zM186 452h2v1h-2zM213 452h1v1h-1zM241 452h1v1h-1zM266 452h2v1h-2zM166 453h1v1h-1zM211 453h2v1h-2zM170 454h3v1h-3zM291 454h2v1h-2zM182 455h1v1h-1zM236 455h2v1h-2zM262 455h1v1h-1zM290 455h1v1h-1zM176 456h3v1h-3zM180 456h2v1h-2zM207 456h1v1h-1zM235 456h1v1h-1zM260 456h2v1h-2zM206 457h1v1h-1zM182 458h3v1h-3zM205 458h1v1h-1zM285 458h2v1h-2zM188 459h1v1h-1zM230 459h2v1h-2zM256 459h1v1h-1zM284 459h1v1h-1zM189 460h2v1h-2zM201 460h1v1h-1zM229 460h1v1h-1zM254 460h2v1h-2zM194 461h1v1h-1zM200 461h1v1h-1zM195 462h2v1h-2zM199 462h1v1h-1zM279 462h2v1h-2zM200 463h1v1h-1zM225 463h1v1h-1zM250 463h1v1h-1zM278 463h1v1h-1zM201 464h2v1h-2zM223 464h2v1h-2zM249 464h1v1h-1zM206 465h2v1h-2zM248 465h1v1h-1zM208 466h1v1h-1zM273 466h2v1h-2zM212 467h2v1h-2zM219 467h1v1h-1zM244 467h1v1h-1zM272 467h1v1h-1zM214 468h1v1h-1zM217 468h2v1h-2zM243 468h1v1h-1zM218 469h2v1h-2zM242 469h1v1h-1zM220 470h1v1h-1zM267 470h2v1h-2zM224 471h3v1h-3zM238 471h1v1h-1zM266 471h1v1h-1zM237 472h1v1h-1zM230 473h3v1h-3zM236 473h1v1h-1zM262 474h1v1h-1zM236 475h3v1h-3zM260 475h2v1h-2zM242 477h3v1h-3zM248 478h1v1h-1zM256 478h1v1h-1zM249 479h2v1h-2zM254 479h2v1h-2z" fill="#000" stroke="none"/>
</g>
<path d="M428 106h1v1h-1zM428 107h1v1h-1zM428 108h1v1h-1zM428 109h1v1h-1zM428 110h1v1h-1zM428 111h1v1h-1zM428 112h1v1h-1zM428 113h1v1h-1zM428 114h1v1h-1zM428 115h1v1h-1zM428 116h1v1h-1zM428 117h1v1h-1zM428 118h1v1h-1zM428 119h1v1h-1zM428 120h1v1h-1zM428 121h1v1h-1zM428 122h1v1h-1zM428 123h1v1h-1zM428 124h1v1h-1zM428 125h1v1h-1zM428 126h1v1h-1zM428 127h1v1h-1zM428 128h1v1h-1zM402 129h15v1h-15zM428 129h1v1h-1zM397 130h5v1h-5zM417 130h6v1h-6zM428 130h1v1h-1zM393 131h4v1h-4zM423 131h4v1h-4zM428 131h1v1h-1zM391 132h2v1h-2zM427 132h2v1h-2zM389 133h2v1h-2zM428 133h4v1h-4zM387 134h2v1h-2zM428 134h1v1h-1zM432 134h2v1h-2zM385 135h2v1h-2zM428 135h1v1h-1zM434 135h2v1h-2zM384 136h1v1h-1zM428 136h1v1h-1zM436 136h2v1h-2zM383 137h1v1h-1zM428 137h1v1h-1zM438 137h2v1h-2zM381 138h2v1h-2zM428 138h1v1h-1zM440 138h1v1h-1zM380 139h1v1h-1zM428 139h1v1h-1zM441 139h2v1h-2zM379 140h1v1h-1zM428 140h1v1h-1zM443 140h2v1h-2zM378 141h1v1h-1zM428 141h1v1h-1zM445 141h1v1h-1zM377 142h1v1h-1zM428 142h1v1h-1zM446 142h1v1h-1zM376 143h1v1h-1zM428 143h1v1h-1zM447 143h1v1h-1zM375 144h1v1h-1zM428 144h1v1h-1zM448 144h1v1h-1zM375 145h1v1h-1zM428 145h1v1h-1zM449 145h2v1h-2zM374 146h1v1h-1zM428 146h1v1h-1zM451 146h1v1h-1zM373 147h1v1h-1zM428 147h1v1h-1zM452 147h1v1h-1zM372 148h1v1h-1zM428 148h1v1h-1zM453 148h1v1h-1zM371 149h1v1h-1zM428 149h1v1h-1zM454 149h1v1h-1zM370 150h1v1h-1zM428 150h1v1h-1zM455 150h1v1h-1zM370 151h1v1h-1zM428 151h1v1h-1zM456 151h1v1h-1zM369 152h1v1h-1zM428 152h1v1h-1zM457 152h1v1h-1zM367 153h14v1h-14zM428 153h1v1h-1zM458 153h1v1h-1zM363 154h4v1h-4zM368 154h1v1h-1zM381 154h6v1h-6zM428 154h1v1h-1zM459 154h1v1h-1zM359 155h4v1h-4zM367 155h1v1h-1zM387 155h4v1h-4zM428 155h1v1h-1zM460 155h1v1h-1zM357 156h2v1h-2zM366 156h1v1h-1zM391 156h4v1h-4zM428 156h1v1h-1zM461 156h1v1h-1zM355 157h2v1h-2zM366 157h1v1h-1zM395 157h4v1h-4zM428 157h1v1h-1zM462 157h1v1h-1zM353 158h2v1h-2zM365 158h1v1h-1zM399 158h2v1h-2zM428 158h1v1h-1zM463 158h1v1h-1zM351 159h2v1h-2zM365 159h1v1h-1zM401 159h2v1h-2zM428 159h1v1h-1zM464 159h1v1h-1zM349 160h2v1h-2zM364 160h1v1h-1zM403 160h2v1h-2zM428 160h1v1h-1zM464 160h1v1h-1zM348 161h1v1h-1zM364 161h1v1h-1zM405 161h2v1h-2zM428 161h1v1h-1zM465 161h1v1h-1zM346 162h2v1h-2zM364 162h1v1h-1zM407 162h2v1h-2zM428 162h1v1h-1zM466 162h1v1h-1zM345 163h1v1h-1zM364 163h1v1h-1zM409 163h2v1h-2zM428 163h1v1h-1zM467 163h1v1h-1zM343 164h2v1h-2zM363 164h1v1h-1zM411 164h1v1h-1zM428 164h1v1h-1zM467 164h1v1h-1zM342 165h1v1h-1zM363 165h1v1h-1zM412 165h2v1h-2zM428 165h1v1h-1zM468 165h1v1h-1zM340 166h2v1h-2zM363 166h1v1h-1zM414 166h1v1h-1zM428 166h1v1h-1zM469 166h1v1h-1zM339 167h1v1h-1zM363 167h1v1h-1zM415 167h1v1h-1zM428 167h1v1h-1zM469 167h1v1h-1zM338 168h1v1h-1zM362 168h1v1h-1zM416 168h2v1h-2zM428 168h1v1h-1zM470 168h1v1h-1zM337 169h1v1h-1zM362 169h1v1h-1zM418 169h1v1h-1zM428 169h1v1h-1zM471 169h1v1h-1zM336 170h1v1h-1zM362 170h1v1h-1zM419 170h2v1h-2zM428 170h1v1h-1zM471 170h1v1h-1zM336 171h1v1h-1zM362 171h1v1h-1zM421 171h1v1h-1zM428 171h1v1h-1zM472 171h1v1h-1zM335 172h1v1h-1zM361 172h1v1h-1zM422 172h1v1h-1zM428 172h1v1h-1zM472 172h1v1h-1zM334 173h1v1h-1zM361 173h1v1h-1zM423 173h1v1h-1zM428 173h1v1h-1zM473 173h1v1h-1zM333 174h1v1h-1zM361 174h1v1h-1zM424 174h1v1h-1zM428 174h1v1h-1zM473 174h1v1h-1zM332 175h1v1h-1zM361 175h1v1h-1zM425 175h2v1h-2zM428 175h1v1h-1zM474 175h1v1h-1zM331 176h1v1h-1zM360 176h1v1h-1zM427 176h2v1h-2zM474 176h1v1h-1zM331 177h1v1h-1zM360 177h1v1h-1zM428 177h1v1h-1zM475 177h1v1h-1zM330 178h1v1h-1zM360 178h1v1h-1zM428 178h2v1h-2zM475 178h1v1h-1zM330 179h1v1h-1zM360 179h1v1h-1zM428 179h1v1h-1zM430 179h1v1h-1zM476 179h1v1h-1zM329 180h1v1h-1zM359 180h1v1h-1zM428 180h1v1h-1zM431 180h1v1h-1zM476 180h1v1h-1zM328 181h1v1h-1zM359 181h1v1h-1zM428 181h1v1h-1zM432 181h1v1h-1zM477 181h1v1h-1zM328 182h1v1h-1zM359 182h1v1h-1zM428 182h1v1h-1zM432 182h1v1h-1zM477 182h1v1h-1zM327 183h1v1h-1zM359 183h1v1h-1zM428 183h1v1h-1zM433 183h1v1h-1zM478 183h1v1h-1zM327 184h8v1h-8zM359 184h1v1h-1zM428 184h1v1h-1zM434 184h1v1h-1zM478 184h1v1h-1zM320 185h7v1h-7zM335 185h6v1h-6zM359 185h1v1h-1zM428 185h1v1h-1zM435 185h1v1h-1zM479 185h1v1h-1zM317 186h3v1h-3zM326 186h1v1h-1zM341 186h4v1h-4zM359 186h1v1h-1zM428 186h1v1h-1zM436 186h1v1h-1zM479 186h1v1h-1zM313 187h4v1h-4zM325 187h1v1h-1zM345 187h4v1h-4zM359 187h1v1h-1zM428 187h1v1h-1zM436 187h1v1h-1zM479 187h1v1h-1zM310 188h3v1h-3zM325 188h1v1h-1zM349 188h4v1h-4zM359 188h1v1h-1zM428 188h1v1h-1zM437 188h1v1h-1zM480 188h1v1h-1zM308 189h2v1h-2zM325 189h1v1h-1zM353 189h2v1h-2zM359 189h1v1h-1zM428 189h1v1h-1zM438 189h1v1h-1zM480 189h1v1h-1zM305 190h3v1h-3zM324 190h1v1h-1zM355 190h2v1h-2zM359 190h1v1h-1zM428 190h1v1h-1zM439 190h1v1h-1zM481 190h1v1h-1zM303 191h2v1h-2zM324 191h1v1h-1zM357 191h3v1h-3zM428 191h1v1h-1zM439 191h1v1h-1zM481 191h1v1h-1zM301 192h2v1h-2zM323 192h1v1h-1zM359 192h1v1h-1zM428 192h1v1h-1zM440 192h1v1h-1zM481 192h1v1h-1zM300 193h1v1h-1zM323 193h1v1h-1zM359 193h3v1h-3zM428 193h1v1h-1zM441 193h1v1h-1zM482 193h1v1h-1zM299 194h1v1h-1zM323 194h1v1h-1zM359 194h1v1h-1zM362 194h2v1h-2zM428 194h1v1h-1zM441 194h1v1h-1zM482 194h1v1h-1zM298 195h1v1h-1zM322 195h1v1h-1zM359 195h1v1h-1zM364 195h1v1h-1zM428 195h1v1h-1zM442 195h1v1h-1zM482 195h1v1h-1zM296 196h2v1h-2zM322 196h1v1h-1zM359 196h1v1h-1zM365 196h2v1h-2zM428 196h1v1h-1zM442 196h1v1h-1zM482 196h1v1h-1zM295 197h1v1h-1zM322 197h1v1h-1zM359 197h1v1h-1zM367 197h1v1h-1zM428 197h2v1h-2zM443 197h1v1h-1zM483 197h1v1h-1zM294 198h1v1h-1zM322 198h1v1h-1zM359 198h1v1h-1zM368 198h1v1h-1zM426 198h2v1h-2zM430 198h3v1h-3zM444 198h1v1h-1zM483 198h1v1h-1zM293 199h1v1h-1zM321 199h1v1h-1zM359 199h1v1h-1zM369 199h2v1h-2zM425 199h1v1h-1zM433 199h4v1h-4zM444 199h1v1h-1zM483 199h1v1h-1zM292 200h1v1h-1zM321 200h1v1h-1zM360 200h1v1h-1zM371 200h1v1h-1zM423 200h2v1h-2zM437 200h3v1h-3zM445 200h1v1h-1zM483 200h1v1h-1zM291 201h1v1h-1zM321 201h1v1h-1zM360 201h1v1h-1zM372 201h2v1h-2zM422 201h1v1h-1zM440 201h3v1h-3zM445 201h1v1h-1zM484 201h1v1h-1zM290 202h1v1h-1zM321 202h1v1h-1zM360 202h1v1h-1zM374 202h1v1h-1zM420 202h2v1h-2zM443 202h4v1h-4zM484 202h1v1h-1zM290 203h1v1h-1zM320 203h1v1h-1zM360 203h1v1h-1zM375 203h1v1h-1zM419 203h1v1h-1zM446 203h3v1h-3zM484 203h1v1h-1zM289 204h1v1h-1zM320 204h1v1h-1zM360 204h1v1h-1zM376 204h2v1h-2zM417 204h2v1h-2zM447 204h1v1h-1zM449 204h4v1h-4zM484 204h1v1h-1zM288 205h1v1h-1zM320 205h1v1h-1zM360 205h1v1h-1zM378 205h1v1h-1zM416 205h1v1h-1zM447 205h1v1h-1zM453 205h3v1h-3zM484 205h1v1h-1zM287 206h1v1h-1zM320 206h1v1h-1zM360 206h1v1h-1zM379 206h1v1h-1zM415 206h1v1h-1zM448 206h1v1h-1zM456 206h3v1h-3zM485 206h1v1h-1zM286 207h1v1h-1zM319 207h1v1h-1zM360 207h1v1h-1zM380 207h1v1h-1zM413 207h2v1h-2zM448 207h1v1h-1zM459 207h3v1h-3zM485 207h1v1h-1zM285 208h1v1h-1zM319 208h1v1h-1zM360 208h1v1h-1zM381 208h2v1h-2zM412 208h1v1h-1zM449 208h1v1h-1zM462 208h3v1h-3zM485 208h1v1h-1zM285 209h1v1h-1zM319 209h1v1h-1zM361 209h1v1h-1zM383 209h1v1h-1zM410 209h2v1h-2zM449 209h1v1h-1zM465 209h4v1h-4zM485 209h1v1h-1zM284 210h1v1h-1zM319 210h1v1h-1zM361 210h1v1h-1zM384 210h1v1h-1zM409 210h1v1h-1zM450 210h1v1h-1zM469 210h3v1h-3zM485 210h1v1h-1zM284 211h1v1h-1zM319 211h1v1h-1zM361 211h1v1h-1zM385 211h1v1h-1zM407 211h2v1h-2zM450 211h1v1h-1zM472 211h3v1h-3zM485 211h1v1h-1zM283 212h1v1h-1zM319 212h1v1h-1zM361 212h1v1h-1zM386 212h1v1h-1zM406 212h1v1h-1zM450 212h1v1h-1zM475 212h3v1h-3zM486 212h1v1h-1zM282 213h1v1h-1zM319 213h1v1h-1zM361 213h1v1h-1zM386 213h1v1h-1zM404 213h2v1h-2zM451 213h1v1h-1zM478 213h4v1h-4zM486 213h1v1h-1zM282 214h1v1h-1zM319 214h1v1h-1zM361 214h1v1h-1zM387 214h1v1h-1zM403 214h1v1h-1zM451 214h1v1h-1zM482 214h3v1h-3zM486 214h1v1h-1zM281 215h1v1h-1zM319 215h1v1h-1zM362 215h1v1h-1zM388 215h1v1h-1zM401 215h2v1h-2zM451 215h1v1h-1zM485 215h3v1h-3zM280 216h11v1h-11zM318 216h1v1h-1zM362 216h1v1h-1zM389 216h1v1h-1zM400 216h1v1h-1zM452 216h1v1h-1zM488 216h3v1h-3zM272 217h9v1h-9zM291 217h7v1h-7zM318 217h1v1h-1zM362 217h1v1h-1zM390 217h1v1h-1zM398 217h2v1h-2zM452 217h1v1h-1zM491 217h3v1h-3zM267 218h5v1h-5zM280 218h1v1h-1zM298 218h3v1h-3zM318 218h1v1h-1zM362 218h1v1h-1zM390 218h1v1h-1zM397 218h1v1h-1zM452 218h1v1h-1zM494 218h4v1h-4zM264 219h3v1h-3zM279 219h1v1h-1zM301 219h2v1h-2zM318 219h1v1h-1zM362 219h1v1h-1zM391 219h1v1h-1zM395 219h2v1h-2zM453 219h1v1h-1zM498 219h3v1h-3zM262 220h2v1h-2zM279 220h1v1h-1zM303 220h3v1h-3zM318 220h1v1h-1zM363 220h1v1h-1zM392 220h1v1h-1zM394 220h1v1h-1zM453 220h1v1h-1zM501 220h2v1h-2zM260 221h2v1h-2zM278 221h1v1h-1zM306 221h2v1h-2zM318 221h1v1h-1zM363 221h1v1h-1zM392 221h2v1h-2zM453 221h1v1h-1zM258 222h2v1h-2zM278 222h1v1h-1zM308 222h2v1h-2zM318 222h1v1h-1zM364 222h1v1h-1zM391 222h1v1h-1zM393 222h1v1h-1zM454 222h1v1h-1zM256 223h2v1h-2zM278 223h1v1h-1zM310 223h2v1h-2zM318 223h1v1h-1zM364 223h1v1h-1zM389 223h2v1h-2zM394 223h1v1h-1zM454 223h1v1h-1zM254 224h2v1h-2zM277 224h1v1h-1zM312 224h2v1h-2zM318 224h1v1h-1zM364 224h1v1h-1zM388 224h1v1h-1zM395 224h1v1h-1zM454 224h1v1h-1zM253 225h1v1h-1zM277 225h1v1h-1zM314 225h2v1h-2zM318 225h1v1h-1zM365 225h1v1h-1zM387 225h1v1h-1zM395 225h1v1h-1zM454 225h1v1h-1zM252 226h1v1h-1zM276 226h1v1h-1zM316 226h3v1h-3zM365 226h1v1h-1zM385 226h2v1h-2zM396 226h1v1h-1zM455 226h1v1h-1zM251 227h1v1h-1zM276 227h1v1h-1zM318 227h2v1h-2zM365 227h1v1h-1zM384 227h1v1h-1zM396 227h1v1h-1zM455 227h1v1h-1zM249 228h2v1h-2zM275 228h1v1h-1zM318 228h1v1h-1zM320 228h1v1h-1zM366 228h1v1h-1zM382 228h2v1h-2zM397 228h1v1h-1zM455 228h1v1h-1zM248 229h1v1h-1zM275 229h1v1h-1zM318 229h1v1h-1zM321 229h2v1h-2zM366 229h1v1h-1zM381 229h1v1h-1zM398 229h1v1h-1zM455 229h1v1h-1zM247 230h1v1h-1zM275 230h1v1h-1zM318 230h1v1h-1zM323 230h2v1h-2zM367 230h1v1h-1zM379 230h2v1h-2zM398 230h1v1h-1zM455 230h1v1h-1zM246 231h1v1h-1zM275 231h1v1h-1zM318 231h1v1h-1zM325 231h1v1h-1zM367 231h1v1h-1zM378 231h1v1h-1zM399 231h1v1h-1zM455 231h1v1h-1zM245 232h1v1h-1zM275 232h1v1h-1zM318 232h1v1h-1zM326 232h2v1h-2zM367 232h1v1h-1zM376 232h2v1h-2zM399 232h1v1h-1zM456 232h1v1h-1zM244 233h1v1h-1zM274 233h1v1h-1zM318 233h1v1h-1zM328 233h1v1h-1zM368 233h1v1h-1zM375 233h1v1h-1zM400 233h1v1h-1zM456 233h1v1h-1zM243 234h1v1h-1zM274 234h1v1h-1zM318 234h1v1h-1zM329 234h1v1h-1zM368 234h1v1h-1zM373 234h2v1h-2zM400 234h1v1h-1zM456 234h1v1h-1zM243 235h1v1h-1zM274 235h1v1h-1zM318 235h1v1h-1zM330 235h1v1h-1zM369 235h1v1h-1zM372 235h1v1h-1zM401 235h1v1h-1zM456 235h1v1h-1zM242 236h1v1h-1zM274 236h1v1h-1zM318 236h1v1h-1zM331 236h1v1h-1zM369 236h3v1h-3zM401 236h1v1h-1zM456 236h1v1h-1zM241 237h1v1h-1zM274 237h1v1h-1zM319 237h1v1h-1zM332 237h2v1h-2zM369 237h2v1h-2zM402 237h1v1h-1zM456 237h1v1h-1zM240 238h1v1h-1zM274 238h1v1h-1zM319 238h1v1h-1zM334 238h1v1h-1zM367 238h2v1h-2zM370 238h1v1h-1zM402 238h1v1h-1zM456 238h1v1h-1zM239 239h1v1h-1zM273 239h1v1h-1zM319 239h1v1h-1zM335 239h1v1h-1zM366 239h1v1h-1zM371 239h1v1h-1zM403 239h1v1h-1zM456 239h1v1h-1zM238 240h1v1h-1zM273 240h1v1h-1zM319 240h1v1h-1zM336 240h1v1h-1zM364 240h2v1h-2zM371 240h1v1h-1zM403 240h1v1h-1zM457 240h1v1h-1zM238 241h1v1h-1zM273 241h1v1h-1zM320 241h1v1h-1zM337 241h1v1h-1zM363 241h1v1h-1zM372 241h1v1h-1zM404 241h1v1h-1zM457 241h1v1h-1zM237 242h1v1h-1zM273 242h1v1h-1zM320 242h1v1h-1zM338 242h1v1h-1zM361 242h2v1h-2zM372 242h1v1h-1zM404 242h1v1h-1zM457 242h1v1h-1zM237 243h1v1h-1zM273 243h1v1h-1zM320 243h1v1h-1zM339 243h1v1h-1zM360 243h1v1h-1zM373 243h1v1h-1zM404 243h1v1h-1zM457 243h1v1h-1zM236 244h1v1h-1zM273 244h1v1h-1zM320 244h1v1h-1zM339 244h1v1h-1zM359 244h1v1h-1zM373 244h1v1h-1zM405 244h1v1h-1zM457 244h1v1h-1zM235 245h1v1h-1zM273 245h1v1h-1zM320 245h1v1h-1zM340 245h1v1h-1zM357 245h2v1h-2zM374 245h1v1h-1zM405 245h1v1h-1zM457 245h1v1h-1zM235 246h1v1h-1zM273 246h1v1h-1zM321 246h1v1h-1zM341 246h1v1h-1zM356 246h1v1h-1zM375 246h1v1h-1zM405 246h1v1h-1zM457 246h1v1h-1zM233 247h11v1h-11zM273 247h1v1h-1zM321 247h1v1h-1zM342 247h1v1h-1zM354 247h2v1h-2zM375 247h1v1h-1zM406 247h1v1h-1zM457 247h1v1h-1zM226 248h7v1h-7zM234 248h1v1h-1zM244 248h7v1h-7zM272 248h1v1h-1zM321 248h1v1h-1zM343 248h1v1h-1zM353 248h1v1h-1zM376 248h1v1h-1zM406 248h1v1h-1zM457 248h1v1h-1zM223 249h3v1h-3zM233 249h1v1h-1zM251 249h3v1h-3zM272 249h1v1h-1zM321 249h1v1h-1zM343 249h1v1h-1zM351 249h2v1h-2zM376 249h1v1h-1zM407 249h1v1h-1zM457 249h1v1h-1zM219 250h4v1h-4zM233 250h1v1h-1zM254 250h2v1h-2zM272 250h1v1h-1zM322 250h1v1h-1zM344 250h1v1h-1zM350 250h1v1h-1zM377 250h1v1h-1zM407 250h1v1h-1zM457 250h1v1h-1zM217 251h2v1h-2zM232 251h1v1h-1zM256 251h3v1h-3zM272 251h1v1h-1zM322 251h1v1h-1zM345 251h1v1h-1zM348 251h2v1h-2zM378 251h1v1h-1zM407 251h1v1h-1zM456 251h1v1h-1zM215 252h2v1h-2zM232 252h1v1h-1zM259 252h3v1h-3zM272 252h1v1h-1zM322 252h1v1h-1zM346 252h2v1h-2zM378 252h1v1h-1zM408 252h1v1h-1zM456 252h1v1h-1zM213 253h2v1h-2zM232 253h1v1h-1zM262 253h2v1h-2zM272 253h1v1h-1zM322 253h1v1h-1zM345 253h2v1h-2zM379 253h1v1h-1zM408 253h1v1h-1zM456 253h1v1h-1zM211 254h2v1h-2zM231 254h1v1h-1zM264 254h2v1h-2zM272 254h1v1h-1zM323 254h1v1h-1zM344 254h1v1h-1zM347 254h1v1h-1zM380 254h1v1h-1zM408 254h1v1h-1zM456 254h1v1h-1zM209 255h2v1h-2zM231 255h1v1h-1zM266 255h2v1h-2zM272 255h1v1h-1zM323 255h1v1h-1zM342 255h2v1h-2zM348 255h1v1h-1zM381 255h1v1h-1zM408 255h1v1h-1zM456 255h1v1h-1zM208 256h1v1h-1zM231 256h1v1h-1zM268 256h2v1h-2zM272 256h1v1h-1zM323 256h1v1h-1zM341 256h1v1h-1zM348 256h1v1h-1zM382 256h1v1h-1zM409 256h1v1h-1zM456 256h1v1h-1zM207 257h1v1h-1zM230 257h1v1h-1zM270 257h3v1h-3zM323 257h1v1h-1zM339 257h2v1h-2zM349 257h1v1h-1zM383 257h1v1h-1zM409 257h1v1h-1zM455 257h1v1h-1zM205 258h2v1h-2zM230 258h1v1h-1zM272 258h2v1h-2zM324 258h1v1h-1zM338 258h1v1h-1zM349 258h1v1h-1zM383 258h1v1h-1zM409 258h1v1h-1zM455 258h1v1h-1zM204 259h1v1h-1zM230 259h1v1h-1zM272 259h1v1h-1zM274 259h1v1h-1zM324 259h1v1h-1zM336 259h2v1h-2zM350 259h1v1h-1zM384 259h1v1h-1zM409 259h1v1h-1zM455 259h1v1h-1zM203 260h1v1h-1zM229 260h1v1h-1zM272 260h1v1h-1zM275 260h1v1h-1zM324 260h1v1h-1zM335 260h1v1h-1zM351 260h1v1h-1zM385 260h1v1h-1zM409 260h1v1h-1zM454 260h1v1h-1zM201 261h2v1h-2zM229 261h1v1h-1zM272 261h1v1h-1zM276 261h2v1h-2zM324 261h1v1h-1zM333 261h2v1h-2zM351 261h1v1h-1zM386 261h1v1h-1zM409 261h1v1h-1zM454 261h1v1h-1zM200 262h1v1h-1zM229 262h1v1h-1zM272 262h1v1h-1zM278 262h1v1h-1zM325 262h1v1h-1zM332 262h1v1h-1zM352 262h1v1h-1zM387 262h1v1h-1zM410 262h1v1h-1zM453 262h1v1h-1zM199 263h1v1h-1zM229 263h1v1h-1zM272 263h1v1h-1zM279 263h2v1h-2zM325 263h1v1h-1zM331 263h1v1h-1zM353 263h1v1h-1zM388 263h1v1h-1zM410 263h1v1h-1zM453 263h1v1h-1zM198 264h1v1h-1zM228 264h1v1h-1zM272 264h1v1h-1zM281 264h1v1h-1zM326 264h1v1h-1zM329 264h2v1h-2zM353 264h1v1h-1zM389 264h1v1h-1zM410 264h1v1h-1zM453 264h1v1h-1zM197 265h1v1h-1zM228 265h1v1h-1zM272 265h1v1h-1zM282 265h1v1h-1zM326 265h1v1h-1zM328 265h1v1h-1zM354 265h1v1h-1zM390 265h1v1h-1zM410 265h1v1h-1zM452 265h1v1h-1zM196 266h1v1h-1zM228 266h1v1h-1zM272 266h1v1h-1zM283 266h1v1h-1zM326 266h2v1h-2zM354 266h1v1h-1zM391 266h1v1h-1zM410 266h1v1h-1zM452 266h1v1h-1zM196 267h1v1h-1zM228 267h1v1h-1zM272 267h1v1h-1zM284 267h1v1h-1zM325 267h1v1h-1zM327 267h1v1h-1zM355 267h1v1h-1zM392 267h1v1h-1zM410 267h1v1h-1zM451 267h1v1h-1zM195 268h1v1h-1zM227 268h1v1h-1zM272 268h1v1h-1zM285 268h2v1h-2zM323 268h2v1h-2zM327 268h1v1h-1zM355 268h1v1h-1zM393 268h1v1h-1zM410 268h1v1h-1zM451 268h1v1h-1zM194 269h1v1h-1zM227 269h1v1h-1zM272 269h1v1h-1zM287 269h1v1h-1zM322 269h1v1h-1zM328 269h1v1h-1zM356 269h1v1h-1zM394 269h1v1h-1zM410 269h1v1h-1zM450 269h1v1h-1zM193 270h1v1h-1zM227 270h1v1h-1zM273 270h1v1h-1zM288 270h1v1h-1zM320 270h2v1h-2zM328 270h1v1h-1zM356 270h1v1h-1zM395 270h1v1h-1zM410 270h1v1h-1zM450 270h1v1h-1zM192 271h1v1h-1zM227 271h1v1h-1zM273 271h1v1h-1zM289 271h1v1h-1zM319 271h1v1h-1zM329 271h1v1h-1zM357 271h1v1h-1zM396 271h2v1h-2zM411 271h1v1h-1zM449 271h1v1h-1zM192 272h1v1h-1zM226 272h1v1h-1zM273 272h1v1h-1zM290 272h1v1h-1zM317 272h2v1h-2zM329 272h1v1h-1zM357 272h1v1h-1zM398 272h2v1h-2zM411 272h1v1h-1zM448 272h1v1h-1zM191 273h1v1h-1zM226 273h1v1h-1zM273 273h1v1h-1zM291 273h1v1h-1zM316 273h1v1h-1zM330 273h1v1h-1zM358 273h1v1h-1zM400 273h2v1h-2zM411 273h1v1h-1zM447 273h1v1h-1zM191 274h1v1h-1zM226 274h1v1h-1zM274 274h1v1h-1zM292 274h1v1h-1zM314 274h2v1h-2zM330 274h1v1h-1zM358 274h1v1h-1zM402 274h2v1h-2zM411 274h1v1h-1zM446 274h1v1h-1zM190 275h1v1h-1zM226 275h1v1h-1zM274 275h1v1h-1zM292 275h1v1h-1zM313 275h1v1h-1zM331 275h1v1h-1zM359 275h1v1h-1zM404 275h1v1h-1zM411 275h1v1h-1zM445 275h1v1h-1zM190 276h1v1h-1zM226 276h1v1h-1zM274 276h1v1h-1zM293 276h1v1h-1zM311 276h2v1h-2zM331 276h1v1h-1zM359 276h1v1h-1zM405 276h2v1h-2zM411 276h1v1h-1zM444 276h1v1h-1zM189 277h1v1h-1zM226 277h1v1h-1zM274 277h1v1h-1zM294 277h1v1h-1zM310 277h1v1h-1zM332 277h1v1h-1zM359 277h1v1h-1zM407 277h2v1h-2zM411 277h1v1h-1zM442 277h2v1h-2zM189 278h1v1h-1zM226 278h1v1h-1zM275 278h1v1h-1zM295 278h1v1h-1zM308 278h2v1h-2zM332 278h1v1h-1zM360 278h1v1h-1zM409 278h3v1h-3zM440 278h2v1h-2zM187 279h10v1h-10zM226 279h1v1h-1zM275 279h1v1h-1zM296 279h1v1h-1zM307 279h1v1h-1zM333 279h1v1h-1zM360 279h1v1h-1zM411 279h2v1h-2zM438 279h2v1h-2zM180 280h7v1h-7zM188 280h1v1h-1zM197 280h7v1h-7zM225 280h1v1h-1zM275 280h1v1h-1zM296 280h1v1h-1zM305 280h2v1h-2zM333 280h1v1h-1zM361 280h1v1h-1zM411 280h1v1h-1zM413 280h2v1h-2zM436 280h2v1h-2zM177 281h3v1h-3zM187 281h1v1h-1zM204 281h4v1h-4zM225 281h1v1h-1zM275 281h1v1h-1zM297 281h1v1h-1zM304 281h1v1h-1zM334 281h1v1h-1zM361 281h1v1h-1zM411 281h1v1h-1zM415 281h4v1h-4zM432 281h4v1h-4zM173 282h4v1h-4zM187 282h1v1h-1zM208 282h4v1h-4zM225 282h1v1h-1zM276 282h1v1h-1zM298 282h1v1h-1zM303 282h1v1h-1zM334 282h1v1h-1zM361 282h1v1h-1zM410 282h1v1h-1zM419 282h13v1h-13zM170 283h3v1h-3zM186 283h1v1h-1zM212 283h3v1h-3zM225 283h1v1h-1zM276 283h1v1h-1zM299 283h1v1h-1zM301 283h2v1h-2zM335 283h1v1h-1zM362 283h1v1h-1zM410 283h1v1h-1zM168 284h2v1h-2zM186 284h1v1h-1zM215 284h2v1h-2zM225 284h1v1h-1zM276 284h1v1h-1zM299 284h2v1h-2zM336 284h1v1h-1zM362 284h1v1h-1zM410 284h1v1h-1zM166 285h2v1h-2zM186 285h1v1h-1zM217 285h2v1h-2zM225 285h1v1h-1zM276 285h1v1h-1zM298 285h3v1h-3zM337 285h1v1h-1zM362 285h1v1h-1zM410 285h1v1h-1zM164 286h2v1h-2zM185 286h1v1h-1zM219 286h2v1h-2zM225 286h1v1h-1zM277 286h1v1h-1zM297 286h1v1h-1zM301 286h1v1h-1zM337 286h1v1h-1zM362 286h1v1h-1zM410 286h1v1h-1zM162 287h2v1h-2zM185 287h1v1h-1zM221 287h2v1h-2zM225 287h1v1h-1zM277 287h1v1h-1zM295 287h2v1h-2zM302 287h1v1h-1zM338 287h1v1h-1zM363 287h1v1h-1zM410 287h1v1h-1zM161 288h1v1h-1zM185 288h1v1h-1zM223 288h3v1h-3zM277 288h1v1h-1zM294 288h1v1h-1zM302 288h1v1h-1zM339 288h1v1h-1zM363 288h1v1h-1zM409 288h1v1h-1zM160 289h1v1h-1zM184 289h1v1h-1zM225 289h2v1h-2zM277 289h1v1h-1zM292 289h2v1h-2zM303 289h1v1h-1zM340 289h1v1h-1zM363 289h1v1h-1zM409 289h1v1h-1zM159 290h1v1h-1zM184 290h1v1h-1zM225 290h1v1h-1zM227 290h1v1h-1zM278 290h1v1h-1zM291 290h1v1h-1zM304 290h1v1h-1zM341 290h1v1h-1zM363 290h1v1h-1zM409 290h1v1h-1zM157 291h2v1h-2zM184 291h1v1h-1zM225 291h1v1h-1zM228 291h1v1h-1zM278 291h1v1h-1zM289 291h2v1h-2zM304 291h1v1h-1zM341 291h1v1h-1zM363 291h1v1h-1zM408 291h1v1h-1zM156 292h1v1h-1zM183 292h1v1h-1zM225 292h1v1h-1zM229 292h2v1h-2zM278 292h1v1h-1zM288 292h1v1h-1zM305 292h1v1h-1zM342 292h1v1h-1zM363 292h1v1h-1zM408 292h1v1h-1zM155 293h1v1h-1zM183 293h1v1h-1zM226 293h1v1h-1zM231 293h1v1h-1zM278 293h1v1h-1zM286 293h2v1h-2zM306 293h1v1h-1zM343 293h1v1h-1zM364 293h1v1h-1zM407 293h1v1h-1zM154 294h1v1h-1zM183 294h1v1h-1zM226 294h1v1h-1zM232 294h2v1h-2zM279 294h1v1h-1zM285 294h1v1h-1zM306 294h1v1h-1zM344 294h1v1h-1zM364 294h1v1h-1zM407 294h1v1h-1zM153 295h1v1h-1zM183 295h1v1h-1zM226 295h1v1h-1zM234 295h1v1h-1zM279 295h1v1h-1zM283 295h2v1h-2zM307 295h1v1h-1zM345 295h1v1h-1zM364 295h1v1h-1zM407 295h1v1h-1zM153 296h1v1h-1zM182 296h1v1h-1zM226 296h1v1h-1zM235 296h1v1h-1zM280 296h1v1h-1zM282 296h1v1h-1zM307 296h1v1h-1zM346 296h1v1h-1zM364 296h1v1h-1zM406 296h1v1h-1zM152 297h1v1h-1zM182 297h1v1h-1zM226 297h1v1h-1zM236 297h1v1h-1zM280 297h2v1h-2zM308 297h1v1h-1zM347 297h1v1h-1zM364 297h1v1h-1zM406 297h1v1h-1zM151 298h1v1h-1zM182 298h1v1h-1zM226 298h1v1h-1zM237 298h1v1h-1zM279 298h1v1h-1zM281 298h1v1h-1zM308 298h1v1h-1zM347 298h1v1h-1zM364 298h1v1h-1zM405 298h1v1h-1zM150 299h1v1h-1zM182 299h1v1h-1zM226 299h1v1h-1zM238 299h2v1h-2zM277 299h2v1h-2zM281 299h1v1h-1zM309 299h1v1h-1zM348 299h1v1h-1zM364 299h1v1h-1zM405 299h1v1h-1zM150 300h1v1h-1zM181 300h1v1h-1zM226 300h1v1h-1zM240 300h1v1h-1zM276 300h1v1h-1zM281 300h1v1h-1zM309 300h1v1h-1zM349 300h1v1h-1zM364 300h1v1h-1zM404 300h1v1h-1zM149 301h1v1h-1zM181 301h1v1h-1zM226 301h1v1h-1zM241 301h1v1h-1zM275 301h1v1h-1zM282 301h1v1h-1zM310 301h1v1h-1zM350 301h1v1h-1zM365 301h1v1h-1zM404 301h1v1h-1zM148 302h1v1h-1zM181 302h1v1h-1zM226 302h1v1h-1zM242 302h1v1h-1zM273 302h2v1h-2zM282 302h1v1h-1zM310 302h1v1h-1zM351 302h2v1h-2zM365 302h1v1h-1zM403 302h1v1h-1zM148 303h1v1h-1zM181 303h1v1h-1zM227 303h1v1h-1zM243 303h1v1h-1zM272 303h1v1h-1zM283 303h1v1h-1zM311 303h1v1h-1zM353 303h1v1h-1zM365 303h1v1h-1zM402 303h1v1h-1zM147 304h1v1h-1zM180 304h1v1h-1zM227 304h1v1h-1zM244 304h1v1h-1zM270 304h2v1h-2zM283 304h1v1h-1zM311 304h1v1h-1zM354 304h2v1h-2zM365 304h1v1h-1zM401 304h1v1h-1zM147 305h1v1h-1zM180 305h1v1h-1zM227 305h1v1h-1zM245 305h1v1h-1zM269 305h1v1h-1zM284 305h1v1h-1zM311 305h1v1h-1zM356 305h1v1h-1zM365 305h1v1h-1zM401 305h1v1h-1zM146 306h1v1h-1zM180 306h1v1h-1zM227 306h1v1h-1zM246 306h1v1h-1zM267 306h2v1h-2zM284 306h1v1h-1zM312 306h1v1h-1zM357 306h2v1h-2zM365 306h1v1h-1zM400 306h1v1h-1zM146 307h1v1h-1zM180 307h1v1h-1zM227 307h1v1h-1zM247 307h1v1h-1zM266 307h1v1h-1zM285 307h1v1h-1zM312 307h1v1h-1zM359 307h1v1h-1zM365 307h1v1h-1zM399 307h1v1h-1zM145 308h1v1h-1zM180 308h1v1h-1zM227 308h1v1h-1zM248 308h1v1h-1zM264 308h2v1h-2zM286 308h1v1h-1zM312 308h1v1h-1zM360 308h2v1h-2zM365 308h1v1h-1zM398 308h1v1h-1zM145 309h1v1h-1zM180 309h1v1h-1zM228 309h1v1h-1zM248 309h1v1h-1zM263 309h1v1h-1zM286 309h1v1h-1zM313 309h1v1h-1zM362 309h2v1h-2zM365 309h1v1h-1zM396 309h2v1h-2zM144 310h1v1h-1zM180 310h1v1h-1zM228 310h1v1h-1zM249 310h1v1h-1zM261 310h2v1h-2zM287 310h1v1h-1zM313 310h1v1h-1zM364 310h2v1h-2zM394 310h2v1h-2zM144 311h1v1h-1zM180 311h1v1h-1zM228 311h1v1h-1zM250 311h1v1h-1zM260 311h1v1h-1zM287 311h1v1h-1zM314 311h1v1h-1zM365 311h5v1h-5zM392 311h2v1h-2zM143 312h1v1h-1zM179 312h1v1h-1zM228 312h1v1h-1zM251 312h1v1h-1zM258 312h2v1h-2zM288 312h1v1h-1zM314 312h1v1h-1zM364 312h1v1h-1zM370 312h4v1h-4zM388 312h4v1h-4zM143 313h1v1h-1zM179 313h1v1h-1zM228 313h1v1h-1zM252 313h1v1h-1zM257 313h1v1h-1zM289 313h1v1h-1zM314 313h1v1h-1zM364 313h1v1h-1zM374 313h14v1h-14zM142 314h1v1h-1zM179 314h1v1h-1zM229 314h1v1h-1zM253 314h1v1h-1zM255 314h2v1h-2zM289 314h1v1h-1zM315 314h1v1h-1zM364 314h1v1h-1zM142 315h1v1h-1zM179 315h1v1h-1zM229 315h1v1h-1zM253 315h2v1h-2zM290 315h1v1h-1zM315 315h1v1h-1zM364 315h1v1h-1zM142 316h1v1h-1zM179 316h1v1h-1zM229 316h1v1h-1zM252 316h3v1h-3zM291 316h1v1h-1zM315 316h1v1h-1zM364 316h1v1h-1zM141 317h1v1h-1zM179 317h1v1h-1zM230 317h1v1h-1zM251 317h1v1h-1zM255 317h1v1h-1zM291 317h1v1h-1zM316 317h1v1h-1zM364 317h1v1h-1zM141 318h1v1h-1zM179 318h1v1h-1zM230 318h1v1h-1zM249 318h2v1h-2zM256 318h1v1h-1zM292 318h1v1h-1zM316 318h1v1h-1zM363 318h1v1h-1zM140 319h1v1h-1zM179 319h1v1h-1zM230 319h1v1h-1zM248 319h1v1h-1zM256 319h1v1h-1zM293 319h1v1h-1zM316 319h1v1h-1zM363 319h1v1h-1zM140 320h1v1h-1zM179 320h1v1h-1zM231 320h1v1h-1zM247 320h1v1h-1zM257 320h1v1h-1zM294 320h1v1h-1zM316 320h1v1h-1zM363 320h1v1h-1zM140 321h1v1h-1zM179 321h1v1h-1zM231 321h1v1h-1zM245 321h2v1h-2zM258 321h1v1h-1zM294 321h1v1h-1zM317 321h1v1h-1zM362 321h1v1h-1zM139 322h1v1h-1zM179 322h1v1h-1zM231 322h1v1h-1zM244 322h1v1h-1zM258 322h1v1h-1zM295 322h1v1h-1zM317 322h1v1h-1zM362 322h1v1h-1zM139 323h1v1h-1zM179 323h1v1h-1zM232 323h1v1h-1zM242 323h2v1h-2zM259 323h1v1h-1zM296 323h1v1h-1zM317 323h1v1h-1zM362 323h1v1h-1zM139 324h1v1h-1zM179 324h1v1h-1zM232 324h1v1h-1zM241 324h1v1h-1zM260 324h1v1h-1zM296 324h1v1h-1zM317 324h1v1h-1zM361 324h1v1h-1zM139 325h1v1h-1zM180 325h1v1h-1zM232 325h1v1h-1zM239 325h2v1h-2zM260 325h1v1h-1zM297 325h1v1h-1zM318 325h1v1h-1zM361 325h1v1h-1zM139 326h1v1h-1zM180 326h1v1h-1zM233 326h1v1h-1zM238 326h1v1h-1zM261 326h1v1h-1zM298 326h1v1h-1zM318 326h1v1h-1zM361 326h1v1h-1zM139 327h1v1h-1zM180 327h1v1h-1zM233 327h1v1h-1zM236 327h2v1h-2zM261 327h1v1h-1zM299 327h1v1h-1zM318 327h1v1h-1zM360 327h1v1h-1zM139 328h1v1h-1zM180 328h1v1h-1zM234 328h2v1h-2zM262 328h1v1h-1zM300 328h1v1h-1zM318 328h1v1h-1zM360 328h1v1h-1zM138 329h1v1h-1zM180 329h1v1h-1zM233 329h2v1h-2zM262 329h1v1h-1zM301 329h1v1h-1zM318 329h1v1h-1zM359 329h1v1h-1zM138 330h1v1h-1zM180 330h1v1h-1zM232 330h1v1h-1zM235 330h1v1h-1zM263 330h1v1h-1zM302 330h1v1h-1zM318 330h1v1h-1zM359 330h1v1h-1zM138 331h1v1h-1zM180 331h1v1h-1zM230 331h2v1h-2zM235 331h1v1h-1zM263 331h1v1h-1zM303 331h1v1h-1zM318 331h1v1h-1zM358 331h1v1h-1zM138 332h1v1h-1zM180 332h1v1h-1zM229 332h1v1h-1zM235 332h1v1h-1zM264 332h1v1h-1zM304 332h1v1h-1zM318 332h1v1h-1zM358 332h1v1h-1zM138 333h1v1h-1zM180 333h1v1h-1zM227 333h2v1h-2zM236 333h1v1h-1zM264 333h1v1h-1zM305 333h1v1h-1zM318 333h1v1h-1zM357 333h1v1h-1zM138 334h1v1h-1zM180 334h1v1h-1zM226 334h1v1h-1zM236 334h1v1h-1zM265 334h1v1h-1zM306 334h1v1h-1zM318 334h1v1h-1zM356 334h1v1h-1zM138 335h1v1h-1zM181 335h1v1h-1zM224 335h2v1h-2zM237 335h1v1h-1zM265 335h1v1h-1zM307 335h2v1h-2zM318 335h1v1h-1zM355 335h1v1h-1zM138 336h1v1h-1zM181 336h1v1h-1zM223 336h1v1h-1zM237 336h1v1h-1zM266 336h1v1h-1zM309 336h1v1h-1zM318 336h1v1h-1zM355 336h1v1h-1zM138 337h1v1h-1zM181 337h1v1h-1zM221 337h2v1h-2zM238 337h1v1h-1zM266 337h1v1h-1zM310 337h1v1h-1zM318 337h1v1h-1zM354 337h1v1h-1zM138 338h1v1h-1zM181 338h1v1h-1zM220 338h1v1h-1zM238 338h1v1h-1zM266 338h1v1h-1zM311 338h2v1h-2zM318 338h1v1h-1zM353 338h1v1h-1zM138 339h1v1h-1zM181 339h1v1h-1zM219 339h1v1h-1zM239 339h1v1h-1zM267 339h1v1h-1zM313 339h2v1h-2zM318 339h1v1h-1zM352 339h1v1h-1zM138 340h1v1h-1zM181 340h1v1h-1zM217 340h2v1h-2zM240 340h1v1h-1zM267 340h1v1h-1zM315 340h2v1h-2zM318 340h1v1h-1zM350 340h2v1h-2zM138 341h1v1h-1zM182 341h1v1h-1zM216 341h1v1h-1zM240 341h1v1h-1zM267 341h1v1h-1zM317 341h2v1h-2zM348 341h2v1h-2zM138 342h1v1h-1zM182 342h1v1h-1zM214 342h2v1h-2zM230 342h1v1h-1zM241 342h1v1h-1zM268 342h1v1h-1zM318 342h3v1h-3zM346 342h2v1h-2zM138 343h1v1h-1zM182 343h1v1h-1zM213 343h1v1h-1zM230 343h1v1h-1zM241 343h1v1h-1zM268 343h1v1h-1zM318 343h1v1h-1zM321 343h3v1h-3zM344 343h2v1h-2zM138 344h1v1h-1zM182 344h1v1h-1zM211 344h2v1h-2zM231 344h1v1h-1zM242 344h1v1h-1zM268 344h1v1h-1zM318 344h1v1h-1zM324 344h4v1h-4zM340 344h4v1h-4zM138 345h1v1h-1zM182 345h1v1h-1zM210 345h1v1h-1zM231 345h1v1h-1zM243 345h1v1h-1zM269 345h1v1h-1zM318 345h1v1h-1zM328 345h12v1h-12zM138 346h1v1h-1zM183 346h1v1h-1zM208 346h2v1h-2zM232 346h1v1h-1zM243 346h1v1h-1zM269 346h1v1h-1zM318 346h1v1h-1zM138 347h1v1h-1zM183 347h1v1h-1zM207 347h1v1h-1zM232 347h1v1h-1zM244 347h1v1h-1zM269 347h1v1h-1zM318 347h1v1h-1zM138 348h1v1h-1zM183 348h1v1h-1zM205 348h2v1h-2zM233 348h1v1h-1zM245 348h1v1h-1zM269 348h1v1h-1zM318 348h1v1h-1zM138 349h1v1h-1zM184 349h1v1h-1zM204 349h1v1h-1zM233 349h1v1h-1zM245 349h1v1h-1zM270 349h1v1h-1zM317 349h1v1h-1zM138 350h1v1h-1zM184 350h1v1h-1zM202 350h2v1h-2zM233 350h1v1h-1zM246 350h1v1h-1zM270 350h1v1h-1zM317 350h1v1h-1zM138 351h1v1h-1zM184 351h1v1h-1zM201 351h1v1h-1zM234 351h1v1h-1zM247 351h1v1h-1zM270 351h1v1h-1zM317 351h1v1h-1zM138 352h1v1h-1zM184 352h1v1h-1zM199 352h2v1h-2zM234 352h1v1h-1zM248 352h1v1h-1zM270 352h1v1h-1zM316 352h1v1h-1zM138 353h1v1h-1zM185 353h1v1h-1zM198 353h1v1h-1zM235 353h1v1h-1zM248 353h1v1h-1zM270 353h1v1h-1zM316 353h1v1h-1zM139 354h1v1h-1zM185 354h1v1h-1zM196 354h2v1h-2zM235 354h1v1h-1zM249 354h1v1h-1zM270 354h1v1h-1zM316 354h1v1h-1zM139 355h1v1h-1zM185 355h1v1h-1zM195 355h1v1h-1zM235 355h1v1h-1zM250 355h1v1h-1zM271 355h1v1h-1zM315 355h1v1h-1zM139 356h1v1h-1zM186 356h1v1h-1zM193 356h2v1h-2zM236 356h1v1h-1zM250 356h1v1h-1zM271 356h1v1h-1zM315 356h1v1h-1zM139 357h1v1h-1zM186 357h1v1h-1zM192 357h1v1h-1zM236 357h1v1h-1zM251 357h1v1h-1zM271 357h1v1h-1zM315 357h1v1h-1zM139 358h1v1h-1zM187 358h1v1h-1zM191 358h1v1h-1zM236 358h1v1h-1zM252 358h1v1h-1zM271 358h1v1h-1zM314 358h1v1h-1zM139 359h1v1h-1zM187 359h1v1h-1zM189 359h2v1h-2zM237 359h1v1h-1zM253 359h1v1h-1zM271 359h1v1h-1zM314 359h1v1h-1zM139 360h1v1h-1zM188 360h1v1h-1zM237 360h1v1h-1zM254 360h1v1h-1zM271 360h1v1h-1zM313 360h1v1h-1zM139 361h1v1h-1zM186 361h3v1h-3zM237 361h1v1h-1zM255 361h2v1h-2zM271 361h1v1h-1zM313 361h1v1h-1zM140 362h1v1h-1zM185 362h1v1h-1zM189 362h1v1h-1zM238 362h1v1h-1zM257 362h1v1h-1zM271 362h1v1h-1zM312 362h1v1h-1zM140 363h1v1h-1zM183 363h2v1h-2zM189 363h1v1h-1zM238 363h1v1h-1zM258 363h1v1h-1zM272 363h1v1h-1zM312 363h1v1h-1zM140 364h1v1h-1zM182 364h1v1h-1zM190 364h1v1h-1zM238 364h1v1h-1zM259 364h1v1h-1zM272 364h1v1h-1zM311 364h1v1h-1zM140 365h1v1h-1zM180 365h2v1h-2zM190 365h1v1h-1zM239 365h1v1h-1zM260 365h1v1h-1zM272 365h1v1h-1zM310 365h1v1h-1zM141 366h1v1h-1zM179 366h1v1h-1zM191 366h1v1h-1zM239 366h1v1h-1zM261 366h2v1h-2zM272 366h1v1h-1zM309 366h1v1h-1zM141 367h1v1h-1zM191 367h1v1h-1zM239 367h1v1h-1zM263 367h1v1h-1zM272 367h1v1h-1zM309 367h1v1h-1zM141 368h1v1h-1zM192 368h1v1h-1zM239 368h1v1h-1zM264 368h1v1h-1zM272 368h1v1h-1zM308 368h1v1h-1zM141 369h1v1h-1zM193 369h1v1h-1zM240 369h1v1h-1zM265 369h2v1h-2zM272 369h1v1h-1zM307 369h1v1h-1zM142 370h1v1h-1zM193 370h1v1h-1zM240 370h1v1h-1zM267 370h2v1h-2zM272 370h1v1h-1zM306 370h1v1h-1zM142 371h1v1h-1zM194 371h1v1h-1zM240 371h1v1h-1zM269 371h2v1h-2zM272 371h1v1h-1zM304 371h2v1h-2zM142 372h1v1h-1zM194 372h1v1h-1zM240 372h1v1h-1zM271 372h2v1h-2zM302 372h2v1h-2zM142 373h1v1h-1zM195 373h1v1h-1zM240 373h1v1h-1zM272 373h3v1h-3zM300 373h2v1h-2zM143 374h1v1h-1zM195 374h1v1h-1zM240 374h1v1h-1zM271 374h1v1h-1zM275 374h3v1h-3zM298 374h2v1h-2zM143 375h1v1h-1zM196 375h1v1h-1zM241 375h1v1h-1zM271 375h1v1h-1zM278 375h4v1h-4zM294 375h4v1h-4zM144 376h1v1h-1zM196 376h1v1h-1zM241 376h1v1h-1zM271 376h1v1h-1zM282 376h12v1h-12zM144 377h1v1h-1zM197 377h1v1h-1zM241 377h1v1h-1zM271 377h1v1h-1zM145 378h1v1h-1zM197 378h1v1h-1zM241 378h1v1h-1zM271 378h1v1h-1zM145 379h1v1h-1zM198 379h1v1h-1zM241 379h1v1h-1zM271 379h1v1h-1zM145 380h1v1h-1zM199 380h1v1h-1zM241 380h1v1h-1zM271 380h1v1h-1zM146 381h1v1h-1zM200 381h1v1h-1zM241 381h1v1h-1zM270 381h1v1h-1zM146 382h1v1h-1zM200 382h1v1h-1zM241 382h1v1h-1zM270 382h1v1h-1zM147 383h1v1h-1zM201 383h1v1h-1zM241 383h1v1h-1zM270 383h1v1h-1zM147 384h1v1h-1zM202 384h1v1h-1zM241 384h1v1h-1zM270 384h1v1h-1zM148 385h1v1h-1zM203 385h1v1h-1zM241 385h1v1h-1zM269 385h1v1h-1zM148 386h1v1h-1zM203 386h1v1h-1zM241 386h1v1h-1zM269 386h1v1h-1zM149 387h1v1h-1zM204 387h1v1h-1zM241 387h1v1h-1zM269 387h1v1h-1zM149 388h1v1h-1zM205 388h1v1h-1zM241 388h1v1h-1zM269 388h1v1h-1zM150 389h1v1h-1zM206 389h1v1h-1zM241 389h1v1h-1zM268 389h1v1h-1zM150 390h1v1h-1zM207 390h1v1h-1zM241 390h1v1h-1zM268 390h1v1h-1zM151 391h1v1h-1zM208 391h1v1h-1zM241 391h1v1h-1zM267 391h1v1h-1zM151 392h1v1h-1zM209 392h1v1h-1zM241 392h1v1h-1zM267 392h1v1h-1zM152 393h1v1h-1zM210 393h1v1h-1zM241 393h1v1h-1zM266 393h1v1h-1zM152 394h1v1h-1zM211 394h1v1h-1zM241 394h1v1h-1zM266 394h1v1h-1zM153 395h1v1h-1zM212 395h1v1h-1zM240 395h1v1h-1zM265 395h1v1h-1zM153 396h1v1h-1zM213 396h1v1h-1zM240 396h1v1h-1zM264 396h1v1h-1zM154 397h1v1h-1zM214 397h2v1h-2zM240 397h1v1h-1zM263 397h1v1h-1zM154 398h1v1h-1zM216 398h1v1h-1zM240 398h1v1h-1zM263 398h1v1h-1zM155 399h1v1h-1zM217 399h2v1h-2zM240 399h1v1h-1zM262 399h1v1h-1zM156 400h1v1h-1zM219 400h1v1h-1zM240 400h1v1h-1zM261 400h1v1h-1zM157 401h1v1h-1zM220 401h2v1h-2zM239 401h1v1h-1zM260 401h1v1h-1zM157 402h1v1h-1zM222 402h1v1h-1zM239 402h1v1h-1zM258 402h2v1h-2zM158 403h1v1h-1zM223 403h2v1h-2zM239 403h1v1h-1zM257 403h1v1h-1zM159 404h1v1h-1zM225 404h2v1h-2zM239 404h1v1h-1zM255 404h2v1h-2zM159 405h1v1h-1zM227 405h2v1h-2zM238 405h1v1h-1zM253 405h2v1h-2zM160 406h1v1h-1zM229 406h3v1h-3zM238 406h1v1h-1zM251 406h2v1h-2zM161 407h1v1h-1zM232 407h4v1h-4zM238 407h1v1h-1zM248 407h3v1h-3zM162 408h1v1h-1zM236 408h12v1h-12zM163 409h1v1h-1zM237 409h1v1h-1zM164 410h1v1h-1zM236 410h1v1h-1zM164 411h1v1h-1zM236 411h1v1h-1zM165 412h1v1h-1zM235 412h1v1h-1zM166 413h1v1h-1zM235 413h1v1h-1zM167 414h1v1h-1zM234 414h1v1h-1zM168 415h1v1h-1zM233 415h1v1h-1zM169 416h1v1h-1zM233 416h1v1h-1zM170 417h1v1h-1zM232 417h1v1h-1zM171 418h1v1h-1zM231 418h1v1h-1zM172 419h2v1h-2zM231 419h1v1h-1zM174 420h1v1h-1zM230 420h1v1h-1zM175 421h1v1h-1zM229 421h1v1h-1zM176 422h1v1h-1zM228 422h1v1h-1zM177 423h2v1h-2zM228 423h1v1h-1zM179 424h2v1h-2zM227 424h1v1h-1zM181 425h2v1h-2zM225 425h2v1h-2zM183 426h2v1h-2zM224 426h1v1h-1zM185 427h2v1h-2zM223 427h1v1h-1zM187 428h2v1h-2zM221 428h2v1h-2zM189 429h2v1h-2zM219 429h2v1h-2zM191 430h2v1h-2zM215 430h4v1h-4zM193 431h6v1h-6zM208 431h7v1h-7zM199 432h9v1h-9z" fill="#000" shape-rendering="crispEdges"/>
</svg>
<svg id="labels" width="648" height="526" style="position:absolute;left:0;top:0;will-change:transform">
<g font-family="Liberation Sans" font-size="8.5" fill="#000">
<text x="341.8" y="259.7">-8</text>
<text x="341.8" y="237.1">-6</text>
<text x="341.8" y="214.5">-4</text>
<text x="341.8" y="191.9">-2</text>
<text x="341.8" y="169.3">0</text>
<text x="341.8" y="146.7">2</text>
<text x="341.8" y="124.1">4</text>
<text x="341.8" y="101.5">6</text>
<text x="341.8" y="78.9">8</text>
<text x="356" y="290" text-anchor="middle">-8</text>
<text x="374" y="296" text-anchor="middle">-6</text>
<text x="393" y="303" text-anchor="middle">-4</text>
<text x="411" y="308" text-anchor="middle">-2</text>
<text x="428" y="313" text-anchor="middle">0</text>
<text x="446" y="320" text-anchor="middle">2</text>
<text x="465" y="325" text-anchor="middle">4</text>
<text x="483" y="331" text-anchor="middle">6</text>
<text x="502" y="337" text-anchor="middle">8</text>
<text x="342.8" y="259.7">0</text>
<text x="301.2" y="288.0">5</text>
<text x="259.6" y="316.3">10</text>
<text x="218.1" y="344.6">15</text>
<text x="176.5" y="372.8">20</text>
<text x="135.0" y="401.1">25</text>
<text x="93.4" y="429.4">30</text>
<text x="430.5" y="103.5" text-anchor="middle">y</text>
<text x="505" y="220" text-anchor="middle">x</text>
<text x="179" y="366" text-anchor="middle">z</text>
</g>
</svg>
<div id="status">27.04.2023 13:33 | FED1+ V17.3 (0004) | DEMOVERSION Lokomoc Tampere | C:\hp\RSAF\1E.FED</div>
</div></body></html>
